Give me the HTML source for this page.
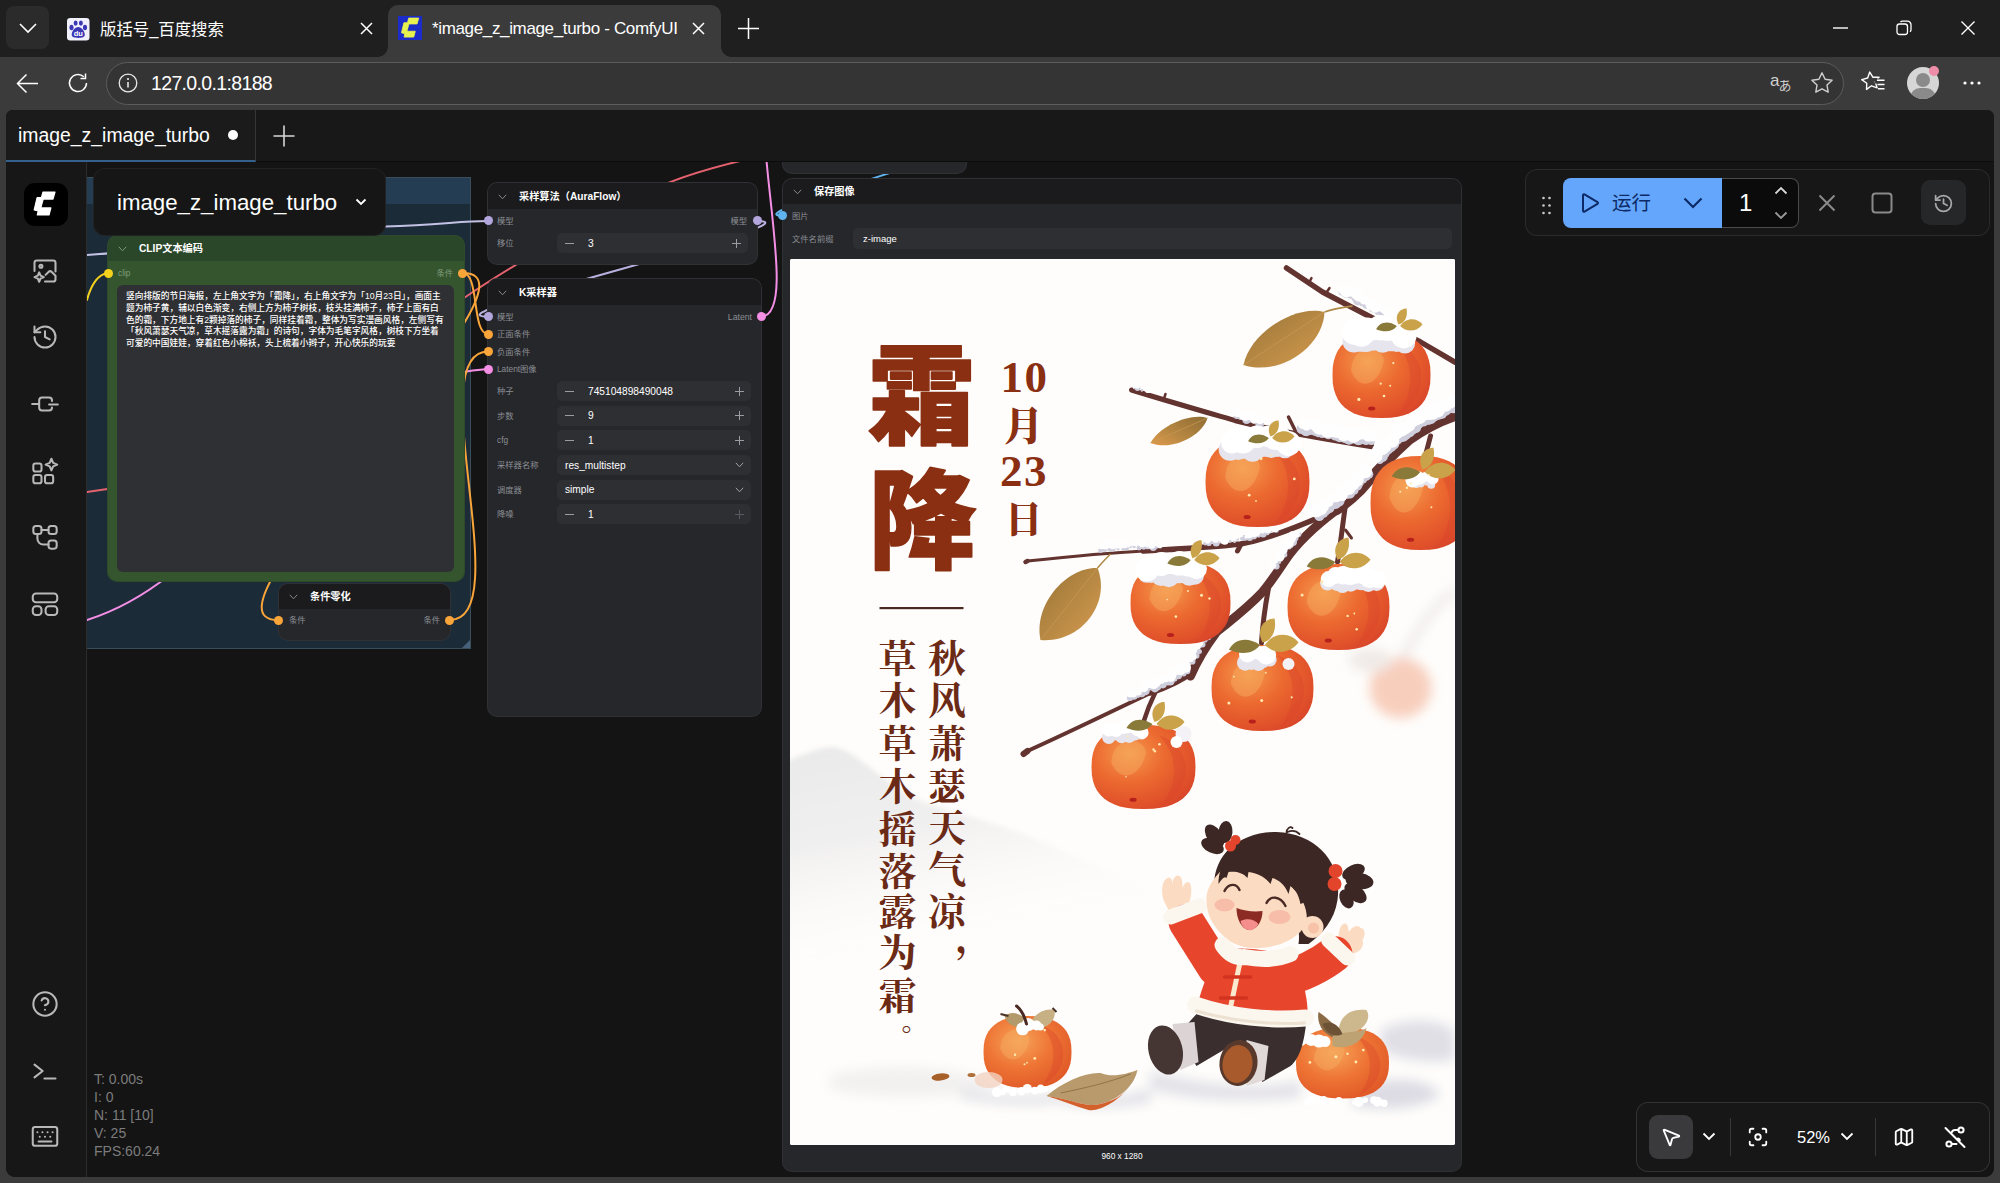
<!DOCTYPE html>
<html lang="zh">
<head>
<meta charset="utf-8">
<title>*image_z_image_turbo - ComfyUI</title>
<style>
*{box-sizing:border-box;margin:0;padding:0}
html,body{width:2000px;height:1183px;overflow:hidden}
body{background:#3b3b3b;font-family:"Liberation Sans","Noto Sans CJK SC",sans-serif;color:#fff;position:relative}
.abs{position:absolute}
svg{display:block;overflow:visible}
/* ---------- browser chrome ---------- */
#titlebar{position:absolute;left:0;top:0;width:2000px;height:57px;background:#1f1f1f}
#tabdrop{position:absolute;left:6px;top:6px;width:43px;height:43px;border-radius:8px;background:#2b2b2b}
.btab{position:absolute;top:5px;height:52px;font-size:17px;color:#fff;white-space:nowrap}
#tab2{left:388px;width:333px;background:#3b3b3b;border-radius:10px 10px 0 0}
#tab2:before,#tab2:after{content:"";position:absolute;bottom:0;width:10px;height:10px;background:radial-gradient(circle at 0 0,rgba(0,0,0,0) 9.5px,#3b3b3b 10px)}
#tab2:before{left:-10px}
#tab2:after{right:-10px;background:radial-gradient(circle at 100% 0,rgba(0,0,0,0) 9.5px,#3b3b3b 10px)}
#toolbar{position:absolute;left:0;top:57px;width:2000px;height:53px;background:#3b3b3b}
#urlbar{position:absolute;left:106px;top:62px;width:1738px;height:43px;border-radius:22px;background:#343434;border:1.5px solid #5c5c5c}
#url{position:absolute;left:151px;top:70px;font-size:19.5px;line-height:26px;color:#fff;letter-spacing:-0.65px}
/* ---------- page ---------- */
#page{position:absolute;left:6px;top:110px;width:1988px;height:1067px;background:#141414;border-radius:7px 7px 9px 9px;overflow:hidden}
#wtabs{position:absolute;left:0;top:0;width:1988px;height:53px;background:#181818;border-bottom:2px solid #0b0b0b}
#wtab{position:absolute;left:0;top:0;width:250px;height:52px;background:#1b1b1b;border-bottom:2px solid #33608c;border-right:1px solid #363636}
#wtab span{position:absolute;left:12px;top:12px;font-size:19.4px;line-height:26px;color:#fff;white-space:nowrap}
#side{position:absolute;left:0;top:52px;width:81px;height:1015px;background:#171718;border-right:1px solid #2c2c2c}
.sico{position:absolute;left:27px;width:24px;height:24px;color:#b8b8b8}
.sico svg{width:28px;height:28px;margin:-2px;fill:none;stroke:currentColor;stroke-width:1.750;stroke-linecap:round;stroke-linejoin:round}
#canvas{position:absolute;left:81px;top:52px;width:1907px;height:1015px;overflow:hidden;background:#141414}

/* ---------- canvas content (screen coords via #cv offset) ---------- */
#cv{position:absolute;left:-87px;top:-162px;width:2000px;height:1183px}
.node{position:absolute;background:#26272a;border-radius:9px;box-shadow:0 0 0 1px #303135}
.node .hd{position:absolute;left:0;top:0;right:0;background:#1b1b1d;border-radius:9px 9px 0 0}
.node .tt{position:absolute;left:31px;font-size:10.2px;font-weight:bold;color:#fff;white-space:nowrap;line-height:14px}
.chev{position:absolute;left:10px;width:9px;height:6px}
.lb{position:absolute;font-size:8.3px;line-height:12px;color:#8b8e95;white-space:nowrap}
.dot{position:absolute;width:9px;height:9px;border-radius:5px}
.wg{position:absolute;height:20px;background:#2e2f33;border-radius:5px}
.wg .v{position:absolute;top:3.800px;font-size:10.2px;line-height:14px;color:#fff;white-space:nowrap}
.wg .mi{position:absolute;left:8px;top:9.5px;width:9px;height:1px;background:#9a9ca2}
.wg .pl{position:absolute;right:7px;top:5.5px;width:9px;height:9px}
.wg .pl:before{content:"";position:absolute;left:0;top:4px;width:9px;height:1px;background:#9a9ca2}
.wg .pl:after{content:"";position:absolute;left:4px;top:0;width:1px;height:9px;background:#9a9ca2}
.wg .dd{position:absolute;right:7px;top:7px;width:9px;height:6px}
</style>
</head>
<body>
<!-- ================= BROWSER CHROME ================= -->
<div id="titlebar">
  <div id="tabdrop"><svg class="abs" style="left:12px;top:16px" width="20" height="12" viewBox="0 0 20 12"><path d="M2 2l8 8 8-8" fill="none" stroke="#fff" stroke-width="1.6"/></svg></div>
  <!-- tab 1 -->
  <div class="btab" id="tab1" style="left:56px;width:330px">
    <svg class="abs" style="left:10.500px;top:12.500px" width="22.500" height="22.500" viewBox="0 0 24 24"><rect x="0" y="0" width="24" height="24" rx="3.500" fill="#f1f1fd"/><g fill="#3b38b4"><ellipse cx="4.800" cy="10.200" rx="2.200" ry="2.900"/><ellipse cx="9.200" cy="5.400" rx="2.100" ry="2.800"/><ellipse cx="14.800" cy="5.400" rx="2.100" ry="2.800"/><ellipse cx="19.200" cy="10.200" rx="2.200" ry="2.900"/><path d="M12 9.500c3.400 0 7 4.600 7 8.200 0 3-2.800 3.500-7 3.500s-7-.5-7-3.500c0-3.600 3.600-8.200 7-8.200z"/></g><text x="12" y="19.600" font-size="8" font-weight="bold" text-anchor="middle" fill="#fff" font-family="Liberation Sans,sans-serif">du</text></svg>
    <span class="abs" style="left:44px;top:11px;line-height:26px;font-size:16.4px">版括号_百度搜索</span>
    <svg class="abs" style="left:304px;top:17px" width="13" height="13" viewBox="0 0 13 13"><path d="M1 1l11 11M12 1L1 12" stroke="#fff" stroke-width="1.5"/></svg>
  </div>
  <!-- tab 2 active -->
  <div class="btab" id="tab2">
    <svg class="abs" style="left:10px;top:11px" width="24" height="24" viewBox="2 3.500 29 29"><rect x="2" y="3.500" width="29" height="29" fill="#1c2cc8"/><path d="M15 6h12l-2 7.100H15.200l-2.400 8.800h10.100L21 29H9.300l.9-4.100-4-1.100 2.900-12.100h4.300z" fill="#e8f24e" stroke="#e8f24e" stroke-width="1" stroke-linejoin="round"/></svg>
    <span class="abs" style="left:44px;top:11px;line-height:26px;font-size:17px;letter-spacing:-0.35px">*image_z_image_turbo - ComfyUI</span>
    <svg class="abs" style="left:304px;top:17px" width="13" height="13" viewBox="0 0 13 13"><path d="M1 1l11 11M12 1L1 12" stroke="#fff" stroke-width="1.500"/></svg>
  </div>
  <svg class="abs" style="left:738px;top:18px" width="21" height="21" viewBox="0 0 21 21"><path d="M10.500 0v21M0 10.500h21" stroke="#fff" stroke-width="1.500"/></svg>
  <!-- window controls -->
  <svg class="abs" style="left:1833px;top:27px" width="15" height="2" viewBox="0 0 15 2"><path d="M0 1h15" stroke="#fff" stroke-width="1.400"/></svg>
  <svg class="abs" style="left:1896px;top:20px" width="16" height="16" viewBox="0 0 16 16"><rect x="1" y="4" width="10.500" height="10.500" rx="2.500" fill="none" stroke="#fff" stroke-width="1.300"/><path d="M4.500 2.200a2.500 2.500 0 0 1 2-1h5a3.500 3.500 0 0 1 3.500 3.500v5a2.500 2.500 0 0 1-1 2" fill="none" stroke="#fff" stroke-width="1.300"/></svg>
  <svg class="abs" style="left:1961px;top:21px" width="14" height="14" viewBox="0 0 14 14"><path d="M0.500 0.500l13 13M13.500 0.500l-13 13" stroke="#fff" stroke-width="1.400"/></svg>
</div>
<div id="toolbar"></div>
<!-- toolbar icons -->
<svg class="abs" style="left:16px;top:73px" width="23" height="21" viewBox="0 0 23 21"><path d="M22 10.500H2M10.500 1.500l-9 9 9 9" fill="none" stroke="#fff" stroke-width="1.500"/></svg>
<svg class="abs" style="left:67px;top:72px" width="22" height="22" viewBox="0 0 22 22"><path d="M19.500 11a8.500 8.500 0 1 1-2.700-6.200" fill="none" stroke="#fff" stroke-width="1.500"/><path d="M18.500 1.500v5h-5" fill="none" stroke="#fff" stroke-width="1.500"/></svg>
<div id="urlbar"></div>
<svg class="abs" style="left:118px;top:73px" width="20" height="20" viewBox="0 0 20 20"><circle cx="10" cy="10" r="8.800" fill="none" stroke="#e8e8e8" stroke-width="1.300"/><circle cx="10" cy="6" r="1.100" fill="#e8e8e8"/><path d="M10 9v5.500" stroke="#e8e8e8" stroke-width="1.600"/></svg>
<div id="url">127.0.0.1:8188</div>
<!-- right toolbar icons -->
<div class="abs" style="left:1770px;top:70px;font-size:17px;color:#cfcfcf;line-height:22px;font-family:'Liberation Sans','Noto Sans CJK JP',sans-serif">a<span style="font-size:13px;position:relative;top:4px;left:-1px">あ</span></div>
<svg class="abs" style="left:1810px;top:71px" width="24" height="23" viewBox="0 0 24 23"><path d="M12 1.800l3.100 6.400 7 1-5.100 4.900 1.200 7-6.200-3.300-6.200 3.300 1.200-7-5.100-4.900 7-1z" fill="none" stroke="#d0d0d0" stroke-width="1.400" stroke-linejoin="round"/></svg>
<svg class="abs" style="left:1860px;top:70px" width="26" height="24" viewBox="0 0 26 24"><path d="M11 2l2.500 5.600 6 .800-4.400 4.200 1 6.100-5.300-2.900-5.400 2.900 1.100-6.100L2 8.400l6.100-.800z" fill="none" stroke="#fff" stroke-width="1.400" stroke-linejoin="round" transform="rotate(-8 11 11)"/><rect x="15" y="8.500" width="10" height="5" fill="#3b3b3b"/><path d="M17 10.200h7.500M17.500 14.500h7M18 18.800h6.500" stroke="#fff" stroke-width="1.500"/></svg>
<div class="abs" style="left:1907px;top:67px;width:32px;height:32px;border-radius:16px;background:#d6d6d6;overflow:hidden"><div class="abs" style="left:9px;top:6px;width:14px;height:14px;border-radius:7px;background:#8a8a8a"></div><div class="abs" style="left:3px;top:21px;width:26px;height:20px;border-radius:12px;background:#8a8a8a"></div></div>
<div class="abs" style="left:1929px;top:66px;width:10px;height:10px;border-radius:5px;background:#ee8da8"></div>
<svg class="abs" style="left:1963px;top:81px" width="18" height="4" viewBox="0 0 18 4"><circle cx="2" cy="2" r="1.600" fill="#fff"/><circle cx="9" cy="2" r="1.600" fill="#fff"/><circle cx="16" cy="2" r="1.600" fill="#fff"/></svg>

<!-- ================= PAGE ================= -->
<div id="page">
  <div id="wtabs">
    <div id="wtab"><span>image_z_image_turbo</span><div class="abs" style="left:222px;top:20px;width:10px;height:10px;border-radius:5px;background:#fff"></div></div>
    <svg class="abs" style="left:267px;top:15px" width="22" height="22" viewBox="0 0 22 22"><path d="M11 0.500v21M0.500 11h21" stroke="#d8d8d8" stroke-width="1.600"/></svg>
  </div>
  <div id="canvas">

<div id="cv">
  <!-- group -->
  <div class="abs" style="left:60px;top:177px;width:411px;height:472px;background:#1b2b38;border:1px solid #3a4d5a"></div><svg class="abs" style="left:462px;top:640px" width="8" height="8" viewBox="0 0 8 8"><path d="M8 0v8H0z" fill="#46627a"/></svg>
  <div class="abs" style="left:61px;top:178px;width:409px;height:26px;background:#243d52"></div>
  <!-- upper partial node -->

  <svg class="abs" style="left:0;top:0" width="2000" height="1183" viewBox="0 0 2000 1183" fill="none" stroke-width="2" stroke-linecap="round">
    <path d="M87 300 C 91 285, 97 274.500, 108 273" stroke="#f5d31d"/>
    <path d="M87 255 C 200 248, 330 228, 385 226.500 S 460 221, 488 221" stroke="#c3c1e4"/>
    <path d="M87 492 C 250 472, 400 345, 464 298 C 520 260, 600 215, 668 183 C 700 170, 735 161, 790 150" stroke="#e4626e"/>
    <path d="M87 620 C 150 600, 190 560, 250 500 S 400 374, 488 369" stroke="#f58fe6"/>
    <path d="M463 273 C 479.500 273, 471.500 334, 488 334" stroke="#f9a53a"/>
    <path d="M463 273 C 561 273, 180 620, 278 620" stroke="#f9a53a"/>
    <path d="M450 620 C 518 620, 420 351.500, 488 351.500" stroke="#f9a53a"/>
    <path d="M757 221 C 828 221, 417 316.500, 488 316.500" stroke="#b9b1e0"/>
    <path d="M761 316.500 C 809 316.500, 726 57, 785.500 45.500" stroke="#f58fe6"/>
    <path d="M966 140 C 1020 140, 729 215.700, 783 215.700" stroke="#5fb3ee"/>
  </svg>

  <div class="abs" style="left:783px;top:150px;width:183px;height:23px;background:#26272a;border-radius:9px;box-shadow:0 0 0 1px #303135"></div>
  <!-- CLIP node -->
  <div class="node" style="left:108px;top:236px;width:356px;height:345px;background:#35552f;box-shadow:0 0 0 1px #2f4a2b">
    <div class="hd" style="height:25px;background:#2b472a"></div>
    <svg class="chev" style="top:10px" viewBox="0 0 9 6"><path d="M0.800 0.800l3.700 4 3.700-4" fill="none" stroke="#7d9a78" stroke-width="1"/></svg>
    <div class="tt" style="top:6px">CLIP文本编码</div>
    <div class="dot" style="left:-4px;top:32.500px;background:#f5d31d"></div>
    <div class="lb" style="left:10px;top:31px;color:#7f9c78">clip</div>
    <div class="lb" style="right:11px;top:31px;color:#7f9c78">条件</div>
    <div class="dot" style="right:-3px;top:32.500px;background:#f9a53a"></div>
    <div class="abs" id="clipta" style="left:9px;top:49px;width:337px;height:287px;background:#2f3033;border-radius:6px;padding:6.300px 9px 0 9px;font-size:8.700px;line-height:11.700px;color:#fff;font-weight:500;white-space:nowrap">竖向排版的节日海报，左上角文字为「霜降」，右上角文字为「10月23日」，画面主<br>题为柿子黄，辅以白色渐变，右侧上方为柿子树枝，枝头挂满柿子，柿子上面有白<br>色的霜，下方地上有2颗掉落的柿子，同样挂着霜，整体为写实漫画风格，左侧写有<br>「秋风萧瑟天气凉，草木摇落露为霜」的诗句，字体为毛笔字风格，树枝下方坐着<br>可爱的中国娃娃，穿着红色小棉袄，头上梳着小辫子，开心快乐的玩耍</div>
  </div>
  <!-- cond zero node -->
  <div class="node" style="left:279px;top:584px;width:171px;height:56px">
    <div class="hd" style="height:25px"></div>
    <svg class="chev" style="top:10px" viewBox="0 0 9 6"><path d="M0.800 0.800l3.700 4 3.700-4" fill="none" stroke="#85878d" stroke-width="1"/></svg>
    <div class="tt" style="top:6px">条件零化</div>
    <div class="dot" style="left:-5px;top:31.500px;background:#f9a53a"></div>
    <div class="lb" style="left:10px;top:30px">条件</div>
    <div class="lb" style="right:10px;top:30px">条件</div>
    <div class="dot" style="right:-4px;top:31.500px;background:#f9a53a"></div>
  </div>
  <!-- sampling node -->
  <div class="node" style="left:488px;top:183px;width:269px;height:81px">
    <div class="hd" style="height:26px"></div>
    <svg class="chev" style="top:11px" viewBox="0 0 9 6"><path d="M0.800 0.800l3.700 4 3.700-4" fill="none" stroke="#85878d" stroke-width="1"/></svg>
    <div class="tt" style="top:7px">采样算法（AuraFlow）</div>
    <div class="dot" style="left:-4.500px;top:33px;background:#b3a6dc"></div>
    <div class="lb" style="left:9px;top:31.500px">模型</div>
    <div class="lb" style="right:10px;top:31.500px">模型</div>
    <div class="dot" style="right:-4.500px;top:33px;background:#b3a6dc"></div>
    <div class="lb" style="left:9px;top:54px">移位</div>
    <div class="wg" style="left:69px;top:50px;width:191px"><div class="mi"></div><div class="v" style="left:31px">3</div><div class="pl"></div></div>
  </div>
  <!-- KSampler -->
  <div class="node" style="left:488px;top:279px;width:273px;height:437px">
    <div class="hd" style="height:26px"></div>
    <svg class="chev" style="top:11px" viewBox="0 0 9 6"><path d="M0.800 0.800l3.700 4 3.700-4" fill="none" stroke="#85878d" stroke-width="1"/></svg>
    <div class="tt" style="top:7px">K采样器</div>
    <div class="dot" style="left:-4.500px;top:33px;background:#b3a6dc"></div>
    <div class="lb" style="left:9px;top:31.500px">模型</div>
    <div class="lb" style="right:9px;top:31.500px;font-size:8.700px">Latent</div>
    <div class="dot" style="right:-4.500px;top:33px;background:#f58fe6"></div>
    <div class="dot" style="left:-4.500px;top:50.500px;background:#f9a53a"></div>
    <div class="lb" style="left:9px;top:49px">正面条件</div>
    <div class="dot" style="left:-4.500px;top:68px;background:#f9a53a"></div>
    <div class="lb" style="left:9px;top:66.500px">负面条件</div>
    <div class="dot" style="left:-4.500px;top:85.500px;background:#f58fe6"></div>
    <div class="lb" style="left:9px;top:84px">Latent图像</div>
    <div class="lb" style="left:9px;top:106px">种子</div>
    <div class="wg" style="left:69px;top:102px;width:194px"><div class="mi"></div><div class="v" style="left:31px">745104898490048</div><div class="pl"></div></div>
    <div class="lb" style="left:9px;top:130.500px">步数</div>
    <div class="wg" style="left:69px;top:126.500px;width:194px"><div class="mi"></div><div class="v" style="left:31px">9</div><div class="pl"></div></div>
    <div class="lb" style="left:9px;top:155px">cfg</div>
    <div class="wg" style="left:69px;top:151px;width:194px"><div class="mi"></div><div class="v" style="left:31px">1</div><div class="pl"></div></div>
    <div class="lb" style="left:9px;top:180px">采样器名称</div>
    <div class="wg" style="left:69px;top:176px;width:194px"><div class="v" style="left:8px">res_multistep</div><svg class="dd" viewBox="0 0 9 6"><path d="M0.800 0.800l3.700 4 3.700-4" fill="none" stroke="#a0a2a8" stroke-width="1"/></svg></div>
    <div class="lb" style="left:9px;top:204.500px">调度器</div>
    <div class="wg" style="left:69px;top:200.500px;width:194px"><div class="v" style="left:8px">simple</div><svg class="dd" viewBox="0 0 9 6"><path d="M0.800 0.800l3.700 4 3.700-4" fill="none" stroke="#a0a2a8" stroke-width="1"/></svg></div>
    <div class="lb" style="left:9px;top:229px">降噪</div>
    <div class="wg" style="left:69px;top:225px;width:194px"><div class="mi"></div><div class="v" style="left:31px">1</div><div class="pl" style="opacity:.4"></div></div>
  </div>
  <!-- Save image node -->
  <div class="node" style="left:783px;top:179px;width:678px;height:992px">
    <div class="hd" style="height:25px"></div>
    <svg class="chev" style="top:10px" viewBox="0 0 9 6"><path d="M0.800 0.800l3.700 4 3.700-4" fill="none" stroke="#85878d" stroke-width="1"/></svg>
    <div class="tt" style="top:6px">保存图像</div>
    <div class="dot" style="left:-5px;top:32px;background:#5fb3ee"></div>
    <div class="lb" style="left:9px;top:30.500px">图片</div>
    <div class="lb" style="left:9px;top:54px">文件名前缀</div>
    <div class="wg" style="left:70px;top:49px;width:599px;height:21px"><div class="v" style="left:10px;font-size:9.500px;top:3.500px">z-image</div></div>
    <div class="abs" style="left:0;top:971px;width:678px;text-align:center;font-size:8.300px;line-height:12px;color:#fff">960 x 1280</div>
    <div class="abs" id="poster" style="left:6.500px;top:80px;width:665px;height:886px;background:#fefdfb;border-radius:2px;overflow:hidden">
<!--POSTER-->
<svg class="abs" style="left:0;top:0" width="665" height="886" viewBox="789.5 259 665 886">
<defs>
<radialGradient id="pg" cx="0.36" cy="0.34" r="0.75"><stop offset="0" stop-color="#f59a4e"/><stop offset="0.45" stop-color="#ec6a30"/><stop offset="0.85" stop-color="#e0502a"/><stop offset="1" stop-color="#d8452a"/></radialGradient>
<radialGradient id="pg2" cx="0.4" cy="0.35" r="0.75"><stop offset="0" stop-color="#f6a45a"/><stop offset="0.5" stop-color="#ee7434"/><stop offset="1" stop-color="#de5526"/></radialGradient>
<linearGradient id="lf" x1="0" y1="0" x2="1" y2="1"><stop offset="0" stop-color="#9a7438"/><stop offset="0.55" stop-color="#b98a44"/><stop offset="1" stop-color="#d89a50"/></linearGradient>
<linearGradient id="lf2" x1="1" y1="0" x2="0" y2="1"><stop offset="0" stop-color="#8f6c34"/><stop offset="0.6" stop-color="#b88842"/><stop offset="1" stop-color="#e09a4c"/></linearGradient>
<linearGradient id="hillg" x1="0" y1="0" x2="0.35" y2="1"><stop offset="0" stop-color="#e9e9ea"/><stop offset="0.45" stop-color="#f1f0f0"/><stop offset="1" stop-color="#fefdfb" stop-opacity="0"/></linearGradient>
<filter id="b6" x="-20%" y="-20%" width="140%" height="140%"><feGaussianBlur stdDeviation="6"/></filter>
<filter id="b12" x="-20%" y="-30%" width="140%" height="160%"><feGaussianBlur stdDeviation="12"/></filter>
<filter id="b3" x="-20%" y="-20%" width="140%" height="140%"><feGaussianBlur stdDeviation="2.5"/></filter>
<filter id="b1" x="-20%" y="-20%" width="140%" height="140%"><feGaussianBlur stdDeviation="0.8"/></filter>
</defs>
<rect x="789.5" y="259" width="665" height="886" fill="#fefdfb"/>
<path d="M780 764 C 800 756, 815 748, 832 747 C 850 748, 870 770, 907 795 C 935 808, 960 814, 988 822 C 1020 832, 1045 842, 1069 854 C 1095 866, 1115 874, 1150 888 L 1150 960 L 780 960 Z" fill="url(#hillg)" filter="url(#b3)"/>
<g filter="url(#b6)" opacity=".55"><path d="M1454 590 C 1430 610, 1410 640, 1402 660" stroke="#d8cfd0" stroke-width="6" fill="none"/><ellipse cx="1400" cy="688" rx="31" ry="30" fill="#f3a98a"/><ellipse cx="1370" cy="660" rx="22" ry="12" fill="#e4dcd8"/></g>
<g filter="url(#b6)">
<path d="M830 1075 C 900 1060, 960 1068, 1000 1085 C 960 1100, 880 1100, 830 1090Z" fill="#efeeee" opacity=".8"/>
<path d="M1380 1030 C 1410 1015, 1440 1020, 1454 1030 L1454 1060 C 1430 1065, 1400 1060, 1380 1050Z" fill="#e0dfe6"/>
<path d="M1150 1070 C 1200 1085, 1260 1090, 1300 1080 L 1300 1098 C 1240 1104, 1190 1100, 1150 1090Z" fill="#e3e2e8"/>
<path d="M1360 1085 C 1400 1075, 1430 1080, 1440 1095 C 1420 1110, 1380 1112, 1350 1105Z" fill="#dddce4"/>
<path d="M1050 1092 C 1090 1100, 1130 1098, 1150 1088 L 1150 1102 C 1110 1110, 1070 1108, 1050 1100Z" fill="#e0dfe6"/>
<path d="M960 1090 C 1000 1096, 1040 1098, 1060 1092 L 1050 1104 C 1010 1106, 980 1102, 960 1098Z" fill="#e2e1e6"/>
</g>
<path d="M1286 268 L1322 292 L1372 318 L1420 342 L1454 362" stroke="#63332f" stroke-width="5.5" fill="none" stroke-linecap="round" stroke-linejoin="round"/>
<path d="M1308 284 l3 -6 M1325 294 l4 -6" stroke="#63332f" stroke-width="2.5" fill="none" stroke-linecap="round" stroke-linejoin="round"/>
<path d="M1131 390 C 1170 402, 1205 412, 1236 421 C 1270 430, 1330 440, 1373 447" stroke="#63332f" stroke-width="5" fill="none" stroke-linecap="round" stroke-linejoin="round"/>
<path d="M1295 431 l-7 -14" stroke="#63332f" stroke-width="3.5" fill="none" stroke-linecap="round" stroke-linejoin="round"/>
<path d="M1163 400 l2 -6" stroke="#63332f" stroke-width="2.5" fill="none" stroke-linecap="round" stroke-linejoin="round"/>
<path d="M1460 414 C 1440 420, 1425 428, 1408 440 C 1390 456, 1372 476, 1360 490 C 1350 500, 1345 504, 1336 510" stroke="#63332f" stroke-width="10.5" fill="none" stroke-linecap="round" stroke-linejoin="round"/>
<path d="M1336 510 C 1320 522, 1300 538, 1285 560 C 1275 575, 1268 585, 1262 592 C 1245 610, 1228 622, 1216 632 C 1204 648, 1196 662, 1190 676" stroke="#63332f" stroke-width="9" fill="none" stroke-linecap="round" stroke-linejoin="round"/>
<path d="M1192 672 C 1180 682, 1165 688, 1150 693" stroke="#63332f" stroke-width="5.5" fill="none" stroke-linecap="round" stroke-linejoin="round"/>
<path d="M1150 693 C 1110 712, 1065 734, 1027 751" stroke="#63332f" stroke-width="4" fill="none" stroke-linecap="round" stroke-linejoin="round"/>
<path d="M1027 751 l-4 3" stroke="#63332f" stroke-width="6" fill="none" stroke-linecap="round" stroke-linejoin="round"/>
<path d="M1027 561 C 1065 557, 1105 553, 1143 551" stroke="#63332f" stroke-width="3.2" fill="none" stroke-linecap="round" stroke-linejoin="round"/>
<path d="M1143 551 C 1180 549, 1215 547, 1240 544 C 1265 540, 1300 526, 1338 509" stroke="#63332f" stroke-width="5.5" fill="none" stroke-linecap="round" stroke-linejoin="round"/>
<path d="M1240 545 l-3 6" stroke="#63332f" stroke-width="5" fill="none" stroke-linecap="round" stroke-linejoin="round"/>
<path d="M1027 561 l-2 1" stroke="#63332f" stroke-width="4.5" fill="none" stroke-linecap="round" stroke-linejoin="round"/>
<path d="M1430 436 C 1427 448, 1424 458, 1422 468" stroke="#63332f" stroke-width="5" fill="none" stroke-linecap="round" stroke-linejoin="round"/>
<path d="M1345 505 C 1342 525, 1340 545, 1337 562" stroke="#63332f" stroke-width="5" fill="none" stroke-linecap="round" stroke-linejoin="round"/>
<path d="M1345 530 l6 8" stroke="#63332f" stroke-width="3" fill="none" stroke-linecap="round" stroke-linejoin="round"/>
<path d="M1268 588 C 1264 610, 1262 625, 1261 643" stroke="#63332f" stroke-width="5" fill="none" stroke-linecap="round" stroke-linejoin="round"/>
<path d="M1155 692 C 1150 702, 1146 712, 1143 722" stroke="#63332f" stroke-width="4.5" fill="none" stroke-linecap="round" stroke-linejoin="round"/>
<path d="M1205 546 C 1240 548, 1270 540, 1300 528" stroke="#63332f" stroke-width="0.1" fill="none" stroke-linecap="round" stroke-linejoin="round"/>
<g><circle cx="1341.3" cy="292.3" r="3.2" fill="#cfcedd"/><circle cx="1345.5" cy="293.7" r="4" fill="#cfcedd"/><circle cx="1349.9" cy="296.1" r="2.6" fill="#cfcedd"/><circle cx="1354.2" cy="298.5" r="3.1" fill="#cfcedd"/><circle cx="1357.2" cy="300.8" r="4.6" fill="#cfcedd"/><circle cx="1361.5" cy="303.3" r="2.9" fill="#cfcedd"/><circle cx="1365.7" cy="304.9" r="3.8" fill="#cfcedd"/><circle cx="1369.7" cy="306.7" r="2.7" fill="#cfcedd"/><circle cx="1372.3" cy="309.3" r="3.3" fill="#cfcedd"/><circle cx="1377.3" cy="311.1" r="3.7" fill="#cfcedd"/><circle cx="1381.3" cy="312" r="4.3" fill="#cfcedd"/><circle cx="1384" cy="314.9" r="4.5" fill="#cfcedd"/><circle cx="1387" cy="315.1" r="4.7" fill="#cfcedd"/><circle cx="1392.3" cy="317.5" r="3.1" fill="#cfcedd"/><circle cx="1394.7" cy="319.5" r="4.1" fill="#cfcedd"/><circle cx="1398.4" cy="321.4" r="3.5" fill="#cfcedd"/><circle cx="1403.1" cy="323.4" r="4" fill="#cfcedd"/><circle cx="1406.7" cy="325.9" r="4.8" fill="#cfcedd"/><circle cx="1408.9" cy="327.4" r="4.2" fill="#cfcedd"/><circle cx="1343.8" cy="289.6" r="5.9" fill="#fefefe"/><circle cx="1345.7" cy="292.4" r="5.1" fill="#fefefe"/><circle cx="1349.9" cy="292" r="4.7" fill="#fefefe"/><circle cx="1356" cy="294.1" r="5.6" fill="#fefefe"/><circle cx="1358.3" cy="296.3" r="5.4" fill="#fefefe"/><circle cx="1363.4" cy="300.5" r="3.9" fill="#fefefe"/><circle cx="1366.9" cy="300" r="3.1" fill="#fefefe"/><circle cx="1370.1" cy="304.5" r="5.2" fill="#fefefe"/><circle cx="1374.6" cy="306.9" r="5.9" fill="#fefefe"/><circle cx="1376.9" cy="307.5" r="3.9" fill="#fefefe"/><circle cx="1380.9" cy="308.7" r="3.1" fill="#fefefe"/><circle cx="1384.4" cy="309.4" r="4.8" fill="#fefefe"/><circle cx="1388.6" cy="314" r="5.6" fill="#fefefe"/><circle cx="1392.4" cy="314.3" r="5.7" fill="#fefefe"/><circle cx="1396.8" cy="316.6" r="4.6" fill="#fefefe"/><circle cx="1400.4" cy="319.4" r="4.7" fill="#fefefe"/><circle cx="1403.5" cy="320.6" r="4.5" fill="#fefefe"/><circle cx="1406.7" cy="323.2" r="3.7" fill="#fefefe"/><circle cx="1411.1" cy="322.1" r="4.6" fill="#fefefe"/></g>
<g><circle cx="1236" cy="416.2" r="2.7" fill="#cfcedd"/><circle cx="1240.3" cy="417.5" r="2.5" fill="#cfcedd"/><circle cx="1246.1" cy="419.6" r="4.4" fill="#cfcedd"/><circle cx="1249.9" cy="419.9" r="2.7" fill="#cfcedd"/><circle cx="1253.4" cy="421.1" r="2.6" fill="#cfcedd"/><circle cx="1259.1" cy="423.7" r="4.4" fill="#cfcedd"/><circle cx="1236.8" cy="412.4" r="4.9" fill="#fefefe"/><circle cx="1242.7" cy="415.4" r="4.4" fill="#fefefe"/><circle cx="1245.1" cy="416" r="5.1" fill="#fefefe"/><circle cx="1250.7" cy="416" r="4.5" fill="#fefefe"/><circle cx="1253.8" cy="419.6" r="3.9" fill="#fefefe"/><circle cx="1259.5" cy="419.1" r="5.1" fill="#fefefe"/></g>
<g><circle cx="1301.3" cy="428.8" r="5.3" fill="#cfcedd"/><circle cx="1305.7" cy="430.1" r="6.1" fill="#cfcedd"/><circle cx="1309.5" cy="431.1" r="3.9" fill="#cfcedd"/><circle cx="1314.8" cy="430.5" r="5.4" fill="#cfcedd"/><circle cx="1317.9" cy="432.3" r="5" fill="#cfcedd"/><circle cx="1321.8" cy="432.7" r="5.2" fill="#cfcedd"/><circle cx="1327.9" cy="434.8" r="4.5" fill="#cfcedd"/><circle cx="1332.1" cy="434.5" r="4.2" fill="#cfcedd"/><circle cx="1334.8" cy="435.2" r="5.3" fill="#cfcedd"/><circle cx="1339.3" cy="436.3" r="5.9" fill="#cfcedd"/><circle cx="1345" cy="437.1" r="6.2" fill="#cfcedd"/><circle cx="1348.7" cy="438.6" r="6.1" fill="#cfcedd"/><circle cx="1353.8" cy="439.2" r="4.3" fill="#cfcedd"/><circle cx="1358" cy="439.1" r="6.2" fill="#cfcedd"/><circle cx="1360.9" cy="439.5" r="4.7" fill="#cfcedd"/><circle cx="1365.5" cy="441.1" r="4" fill="#cfcedd"/><circle cx="1370.6" cy="441.2" r="3.8" fill="#cfcedd"/><circle cx="1302.7" cy="423.6" r="5.4" fill="#fefefe"/><circle cx="1306.1" cy="425.3" r="5.4" fill="#fefefe"/><circle cx="1312" cy="424.2" r="4.7" fill="#fefefe"/><circle cx="1316" cy="425.2" r="6.7" fill="#fefefe"/><circle cx="1318.9" cy="427.9" r="6.9" fill="#fefefe"/><circle cx="1322.3" cy="427.7" r="4.5" fill="#fefefe"/><circle cx="1327.1" cy="430.4" r="7.4" fill="#fefefe"/><circle cx="1333.7" cy="430.2" r="7.3" fill="#fefefe"/><circle cx="1336.3" cy="432.4" r="5.6" fill="#fefefe"/><circle cx="1341.3" cy="433.1" r="4.8" fill="#fefefe"/><circle cx="1343.5" cy="434.2" r="7.1" fill="#fefefe"/><circle cx="1348.7" cy="433.9" r="4.8" fill="#fefefe"/><circle cx="1353.1" cy="435.5" r="7.3" fill="#fefefe"/><circle cx="1357.3" cy="434.3" r="6.1" fill="#fefefe"/><circle cx="1361" cy="434.5" r="5" fill="#fefefe"/><circle cx="1368" cy="435.2" r="6.6" fill="#fefefe"/><circle cx="1372.4" cy="437" r="4.6" fill="#fefefe"/></g>
<g><circle cx="1452.7" cy="407" r="6.2" fill="#cfcedd"/><circle cx="1447.5" cy="409.1" r="4.9" fill="#cfcedd"/><circle cx="1445.4" cy="410.3" r="5.4" fill="#cfcedd"/><circle cx="1440.8" cy="412.9" r="6.1" fill="#cfcedd"/><circle cx="1437.4" cy="414.1" r="6" fill="#cfcedd"/><circle cx="1433.3" cy="415.9" r="5.9" fill="#cfcedd"/><circle cx="1429.9" cy="418.1" r="6.2" fill="#cfcedd"/><circle cx="1427.4" cy="419" r="5.9" fill="#cfcedd"/><circle cx="1423" cy="422" r="4.5" fill="#cfcedd"/><circle cx="1418" cy="423.4" r="5.3" fill="#cfcedd"/><circle cx="1414.9" cy="427.5" r="5.8" fill="#cfcedd"/><circle cx="1411.1" cy="429.5" r="5.7" fill="#cfcedd"/><circle cx="1409" cy="432.5" r="5.1" fill="#cfcedd"/><circle cx="1404.9" cy="434.7" r="5.5" fill="#cfcedd"/><circle cx="1402" cy="435.9" r="6.2" fill="#cfcedd"/><circle cx="1396.9" cy="439.6" r="5.1" fill="#cfcedd"/><circle cx="1393.1" cy="443.9" r="5.7" fill="#cfcedd"/><circle cx="1390.3" cy="446.7" r="5.5" fill="#cfcedd"/><circle cx="1387.6" cy="449.4" r="5" fill="#cfcedd"/><circle cx="1384.7" cy="453.3" r="4.6" fill="#cfcedd"/><circle cx="1381.5" cy="456.3" r="5.9" fill="#cfcedd"/><circle cx="1379.3" cy="459.7" r="4.3" fill="#cfcedd"/><circle cx="1449.4" cy="401.8" r="6.9" fill="#fefefe"/><circle cx="1445.3" cy="405.5" r="6.2" fill="#fefefe"/><circle cx="1442.5" cy="406.5" r="5.2" fill="#fefefe"/><circle cx="1440.6" cy="406.7" r="6.2" fill="#fefefe"/><circle cx="1436.7" cy="409.7" r="7.9" fill="#fefefe"/><circle cx="1431.7" cy="412" r="7.7" fill="#fefefe"/><circle cx="1428.3" cy="412.6" r="7.4" fill="#fefefe"/><circle cx="1424.4" cy="413.2" r="7.1" fill="#fefefe"/><circle cx="1418.9" cy="417" r="7.2" fill="#fefefe"/><circle cx="1415.1" cy="418.2" r="7.4" fill="#fefefe"/><circle cx="1412.7" cy="421.8" r="5.4" fill="#fefefe"/><circle cx="1408.8" cy="426" r="5.8" fill="#fefefe"/><circle cx="1405.1" cy="428.5" r="5.8" fill="#fefefe"/><circle cx="1401.1" cy="429.8" r="6.8" fill="#fefefe"/><circle cx="1397.1" cy="432.1" r="6.4" fill="#fefefe"/><circle cx="1394.1" cy="435.8" r="5.9" fill="#fefefe"/><circle cx="1391.7" cy="440.7" r="7" fill="#fefefe"/><circle cx="1387.8" cy="442.1" r="6.1" fill="#fefefe"/><circle cx="1384.6" cy="446.6" r="6.2" fill="#fefefe"/><circle cx="1381.1" cy="447.4" r="7.8" fill="#fefefe"/><circle cx="1377.6" cy="450.6" r="6.3" fill="#fefefe"/><circle cx="1374.9" cy="455.8" r="7.3" fill="#fefefe"/></g>
<g><circle cx="1368.2" cy="474.2" r="4.6" fill="#cfcedd"/><circle cx="1365.8" cy="476.8" r="4" fill="#cfcedd"/><circle cx="1362.5" cy="479.4" r="4" fill="#cfcedd"/><circle cx="1358.4" cy="482.7" r="4.9" fill="#cfcedd"/><circle cx="1356.7" cy="485.9" r="4.9" fill="#cfcedd"/><circle cx="1353.6" cy="490.4" r="4.4" fill="#cfcedd"/><circle cx="1349.5" cy="493.3" r="5.2" fill="#cfcedd"/><circle cx="1346.8" cy="494.7" r="4" fill="#cfcedd"/><circle cx="1341.7" cy="497.5" r="4.2" fill="#cfcedd"/><circle cx="1338.3" cy="500.9" r="5.8" fill="#cfcedd"/><circle cx="1335.2" cy="503.5" r="5.4" fill="#cfcedd"/><circle cx="1331.3" cy="505.1" r="4" fill="#cfcedd"/><circle cx="1328.7" cy="507.7" r="5.5" fill="#cfcedd"/><circle cx="1325.4" cy="510" r="5.2" fill="#cfcedd"/><circle cx="1322.5" cy="512.2" r="5.7" fill="#cfcedd"/><circle cx="1318.9" cy="515.8" r="5.2" fill="#cfcedd"/><circle cx="1364.9" cy="471.4" r="6.7" fill="#fefefe"/><circle cx="1362" cy="474" r="4.9" fill="#fefefe"/><circle cx="1359.1" cy="475" r="5" fill="#fefefe"/><circle cx="1356.7" cy="479.8" r="6.5" fill="#fefefe"/><circle cx="1352.1" cy="483.4" r="7.1" fill="#fefefe"/><circle cx="1350.6" cy="485.1" r="6.3" fill="#fefefe"/><circle cx="1348.1" cy="488" r="7" fill="#fefefe"/><circle cx="1341.8" cy="491.4" r="6.5" fill="#fefefe"/><circle cx="1341" cy="494.6" r="6.4" fill="#fefefe"/><circle cx="1335.6" cy="496.9" r="5.4" fill="#fefefe"/><circle cx="1332.6" cy="498" r="4.6" fill="#fefefe"/><circle cx="1328.1" cy="502.1" r="4.9" fill="#fefefe"/><circle cx="1325.3" cy="503.3" r="4.9" fill="#fefefe"/><circle cx="1321.5" cy="505.8" r="7.1" fill="#fefefe"/><circle cx="1320.5" cy="509.3" r="6.1" fill="#fefefe"/><circle cx="1315.4" cy="510.4" r="7.1" fill="#fefefe"/></g>
<g><circle cx="1298.7" cy="534.6" r="2.3" fill="#cfcedd"/><circle cx="1294.6" cy="538" r="3.4" fill="#cfcedd"/><circle cx="1292.4" cy="542" r="4.1" fill="#cfcedd"/><circle cx="1290.5" cy="544.9" r="2.8" fill="#cfcedd"/><circle cx="1288.9" cy="547.3" r="2.2" fill="#cfcedd"/><circle cx="1284.8" cy="551" r="2.3" fill="#cfcedd"/><circle cx="1284.1" cy="554.8" r="2.7" fill="#cfcedd"/><circle cx="1280.4" cy="559.7" r="2" fill="#cfcedd"/><circle cx="1278.8" cy="562" r="1.9" fill="#cfcedd"/><circle cx="1275.8" cy="566.3" r="3.3" fill="#cfcedd"/><circle cx="1295.8" cy="534.3" r="3.5" fill="#fefefe"/><circle cx="1291.9" cy="534.9" r="3.7" fill="#fefefe"/><circle cx="1290.6" cy="538.5" r="4.8" fill="#fefefe"/><circle cx="1288.4" cy="543.3" r="4.8" fill="#fefefe"/><circle cx="1285.2" cy="545.4" r="4.6" fill="#fefefe"/><circle cx="1282.1" cy="550.1" r="4.6" fill="#fefefe"/><circle cx="1281.4" cy="553.5" r="2.3" fill="#fefefe"/><circle cx="1279.4" cy="556.5" r="4.8" fill="#fefefe"/><circle cx="1275" cy="560.2" r="2.6" fill="#fefefe"/><circle cx="1272.3" cy="564.9" r="3.5" fill="#fefefe"/></g>
<g><circle cx="1214.1" cy="628.8" r="2.4" fill="#cfcedd"/><circle cx="1210.3" cy="633.1" r="3.4" fill="#cfcedd"/><circle cx="1207.5" cy="636.7" r="3.5" fill="#cfcedd"/><circle cx="1204.4" cy="639.8" r="2.8" fill="#cfcedd"/><circle cx="1202" cy="644.4" r="3" fill="#cfcedd"/><circle cx="1199.5" cy="646.8" r="1.7" fill="#cfcedd"/><circle cx="1198.9" cy="651.5" r="2.5" fill="#cfcedd"/><circle cx="1195.8" cy="655.4" r="3.2" fill="#cfcedd"/><circle cx="1193.7" cy="659" r="1.6" fill="#cfcedd"/><circle cx="1191.9" cy="661.5" r="3.1" fill="#cfcedd"/><circle cx="1211.6" cy="626.8" r="2.3" fill="#fefefe"/><circle cx="1208.6" cy="632.2" r="3.9" fill="#fefefe"/><circle cx="1205.2" cy="634.1" r="4.1" fill="#fefefe"/><circle cx="1202.1" cy="637.8" r="3" fill="#fefefe"/><circle cx="1198.8" cy="642.6" r="4.2" fill="#fefefe"/><circle cx="1198.2" cy="647.1" r="1.9" fill="#fefefe"/><circle cx="1194.5" cy="648.4" r="2.1" fill="#fefefe"/><circle cx="1192.5" cy="652.1" r="3.1" fill="#fefefe"/><circle cx="1193.2" cy="656.7" r="3" fill="#fefefe"/><circle cx="1190.4" cy="659.4" r="2.7" fill="#fefefe"/></g>
<g><circle cx="1186.4" cy="670.8" r="3.5" fill="#cfcedd"/><circle cx="1183.2" cy="673.7" r="2.7" fill="#cfcedd"/><circle cx="1177.9" cy="675.5" r="3.7" fill="#cfcedd"/><circle cx="1174.1" cy="678.7" r="2.9" fill="#cfcedd"/><circle cx="1169.7" cy="681" r="4.6" fill="#cfcedd"/><circle cx="1166.8" cy="682" r="3.6" fill="#cfcedd"/><circle cx="1162.4" cy="684.6" r="3.8" fill="#cfcedd"/><circle cx="1157.3" cy="686.5" r="3.7" fill="#cfcedd"/><circle cx="1154.4" cy="687.9" r="4.5" fill="#cfcedd"/><circle cx="1147.9" cy="688.8" r="2.3" fill="#cfcedd"/><circle cx="1144.8" cy="690.9" r="4.4" fill="#cfcedd"/><circle cx="1141.2" cy="692.9" r="4.3" fill="#cfcedd"/><circle cx="1137" cy="694.7" r="3.2" fill="#cfcedd"/><circle cx="1133.5" cy="695.6" r="4.2" fill="#cfcedd"/><circle cx="1129.6" cy="697.8" r="3.2" fill="#cfcedd"/><circle cx="1185.5" cy="667.7" r="5" fill="#fefefe"/><circle cx="1180" cy="670.2" r="5.1" fill="#fefefe"/><circle cx="1177.3" cy="671.2" r="3.6" fill="#fefefe"/><circle cx="1171.8" cy="673.8" r="4.8" fill="#fefefe"/><circle cx="1170.4" cy="677" r="4.9" fill="#fefefe"/><circle cx="1165.2" cy="678.5" r="3.7" fill="#fefefe"/><circle cx="1160.5" cy="679.7" r="4.4" fill="#fefefe"/><circle cx="1155.9" cy="683.1" r="3.9" fill="#fefefe"/><circle cx="1153.2" cy="684.3" r="5" fill="#fefefe"/><circle cx="1147.4" cy="684.8" r="3.5" fill="#fefefe"/><circle cx="1143.4" cy="687.4" r="4.6" fill="#fefefe"/><circle cx="1140.1" cy="689.8" r="2.7" fill="#fefefe"/><circle cx="1137.7" cy="691.8" r="3.7" fill="#fefefe"/><circle cx="1133" cy="694.2" r="3.2" fill="#fefefe"/><circle cx="1129.6" cy="693.3" r="4.1" fill="#fefefe"/></g>
<g><circle cx="1100" cy="550.7" r="2.4" fill="#cfcedd"/><circle cx="1104.2" cy="549.7" r="2.4" fill="#cfcedd"/><circle cx="1108.4" cy="549.5" r="1.8" fill="#cfcedd"/><circle cx="1111.9" cy="548.6" r="3.2" fill="#cfcedd"/><circle cx="1117.6" cy="549" r="1.5" fill="#cfcedd"/><circle cx="1122.2" cy="549.3" r="1.4" fill="#cfcedd"/><circle cx="1125.8" cy="547.4" r="2.9" fill="#cfcedd"/><circle cx="1129.9" cy="546.9" r="1.4" fill="#cfcedd"/><circle cx="1133.7" cy="546.6" r="1.8" fill="#cfcedd"/><circle cx="1138.5" cy="548" r="2.4" fill="#cfcedd"/><circle cx="1143.3" cy="547.1" r="2.6" fill="#cfcedd"/><circle cx="1147.3" cy="546.4" r="2.9" fill="#cfcedd"/><circle cx="1152.7" cy="547.2" r="3.7" fill="#cfcedd"/><circle cx="1155.8" cy="545.8" r="3" fill="#cfcedd"/><circle cx="1159.6" cy="546.6" r="2" fill="#cfcedd"/><circle cx="1100.7" cy="546.6" r="2.7" fill="#fefefe"/><circle cx="1105" cy="545.1" r="4.4" fill="#fefefe"/><circle cx="1109.5" cy="546.2" r="2.1" fill="#fefefe"/><circle cx="1112.2" cy="544.8" r="4.4" fill="#fefefe"/><circle cx="1117.7" cy="545.1" r="3.4" fill="#fefefe"/><circle cx="1120.6" cy="546.9" r="1.8" fill="#fefefe"/><circle cx="1124.3" cy="544.4" r="3.8" fill="#fefefe"/><circle cx="1128.4" cy="545.8" r="1.8" fill="#fefefe"/><circle cx="1134.3" cy="544.5" r="2" fill="#fefefe"/><circle cx="1139.2" cy="543.3" r="2.1" fill="#fefefe"/><circle cx="1141.7" cy="543.9" r="3.4" fill="#fefefe"/><circle cx="1146.5" cy="545.3" r="2.1" fill="#fefefe"/><circle cx="1151" cy="544.8" r="3.9" fill="#fefefe"/><circle cx="1155.7" cy="544.5" r="2.1" fill="#fefefe"/><circle cx="1159.2" cy="544.6" r="3.4" fill="#fefefe"/></g>
<g><circle cx="1196.2" cy="544.1" r="2.5" fill="#cfcedd"/><circle cx="1199" cy="543.3" r="1.7" fill="#cfcedd"/><circle cx="1204.8" cy="543.6" r="2" fill="#cfcedd"/><circle cx="1208.4" cy="543.3" r="2.8" fill="#cfcedd"/><circle cx="1212.3" cy="542" r="1.7" fill="#cfcedd"/><circle cx="1215.7" cy="543" r="3.5" fill="#cfcedd"/><circle cx="1221.1" cy="541.8" r="1.5" fill="#cfcedd"/><circle cx="1225.3" cy="540.9" r="2.3" fill="#cfcedd"/><circle cx="1229.6" cy="541.2" r="1.5" fill="#cfcedd"/><circle cx="1234" cy="541.4" r="1.5" fill="#cfcedd"/><circle cx="1237" cy="539.1" r="1.6" fill="#cfcedd"/><circle cx="1241.6" cy="538.5" r="2.1" fill="#cfcedd"/><circle cx="1244.6" cy="537.8" r="3" fill="#cfcedd"/><circle cx="1249.2" cy="537.7" r="3.3" fill="#cfcedd"/><circle cx="1253.6" cy="536.4" r="2.8" fill="#cfcedd"/><circle cx="1258.4" cy="536.3" r="1.4" fill="#cfcedd"/><circle cx="1262.6" cy="533.7" r="3.7" fill="#cfcedd"/><circle cx="1266.9" cy="533.1" r="2.2" fill="#cfcedd"/><circle cx="1270.3" cy="531.2" r="1.6" fill="#cfcedd"/><circle cx="1275.7" cy="530.2" r="2.5" fill="#cfcedd"/><circle cx="1196.7" cy="540.7" r="1.6" fill="#fefefe"/><circle cx="1199" cy="540.4" r="3.1" fill="#fefefe"/><circle cx="1204.8" cy="539.1" r="2.7" fill="#fefefe"/><circle cx="1207.1" cy="540.6" r="3.1" fill="#fefefe"/><circle cx="1211.6" cy="539.3" r="1.6" fill="#fefefe"/><circle cx="1215.1" cy="539.4" r="3.4" fill="#fefefe"/><circle cx="1219.9" cy="539.1" r="2.1" fill="#fefefe"/><circle cx="1224.2" cy="540.3" r="4.4" fill="#fefefe"/><circle cx="1229.7" cy="537.9" r="2" fill="#fefefe"/><circle cx="1233.4" cy="538.9" r="2.1" fill="#fefefe"/><circle cx="1236.1" cy="537.8" r="1.5" fill="#fefefe"/><circle cx="1240.2" cy="534.8" r="2.5" fill="#fefefe"/><circle cx="1245.5" cy="537.1" r="1.6" fill="#fefefe"/><circle cx="1248.7" cy="533.7" r="4.5" fill="#fefefe"/><circle cx="1253.8" cy="534.8" r="2.5" fill="#fefefe"/><circle cx="1256.4" cy="532.6" r="3.4" fill="#fefefe"/><circle cx="1261.9" cy="530.5" r="2.9" fill="#fefefe"/><circle cx="1267" cy="528.9" r="4.3" fill="#fefefe"/><circle cx="1271.2" cy="528" r="2.4" fill="#fefefe"/><circle cx="1274.4" cy="528" r="4.3" fill="#fefefe"/></g>
<g><circle cx="1133.8" cy="387.8" r="1.5" fill="#cfcedd"/><circle cx="1137.1" cy="388.1" r="2.9" fill="#cfcedd"/><circle cx="1141.4" cy="390.4" r="1.3" fill="#cfcedd"/><circle cx="1146.3" cy="390.6" r="1.2" fill="#cfcedd"/><circle cx="1133.8" cy="386.2" r="1.9" fill="#fefefe"/><circle cx="1136.8" cy="385.8" r="2.8" fill="#fefefe"/><circle cx="1143.6" cy="388.6" r="1.4" fill="#fefefe"/><circle cx="1147.7" cy="389.7" r="3.4" fill="#fefefe"/></g>
<path d="M1243 365 C 1279.7 376.9, 1323.1 346, 1324 312 C 1295.8 304.2, 1250.1 331.7, 1243 365 Z" fill="url(#lf)"/>
<path d="M1243 365 L1324 312" stroke="#c79b55" stroke-width="1" opacity=".7"/>
<path d="M1324 312 C 1335 308, 1345 307, 1352 306" stroke="#b08a48" stroke-width="1.8" fill="none"/>
<path d="M1150 443 C 1170.6 451.2, 1201.5 436.5, 1207 418 C 1191 412.4, 1159.2 425.2, 1150 443 Z" fill="url(#lf2)"/>
<path d="M1150 443 L1207 418" stroke="#c79b55" stroke-width="1" opacity=".7"/>
<path d="M1040 640 C 1081.3 643.4, 1110.8 602.4, 1097 568 C 1065.8 566.7, 1032.6 604.9, 1040 640 Z" fill="url(#lf)"/>
<path d="M1040 640 L1097 568" stroke="#c79b55" stroke-width="1" opacity=".7"/>
<path d="M1097 568 C 1102 562, 1106 558, 1110 554" stroke="#b08a48" stroke-width="1.6" fill="none"/>
<path d="M1470 503 L1469.7 511.9 L1468.6 518.6 L1466.9 524.5 L1464.5 529.7 L1461.4 534.3 L1457.7 538.4 L1453.3 541.9 L1448.4 544.8 L1442.8 547.1 L1436.6 548.7 L1429.5 549.7 L1420 550 L1410.5 549.7 L1403.4 548.7 L1397.2 547.1 L1391.6 544.8 L1386.7 541.9 L1382.3 538.4 L1378.6 534.3 L1375.5 529.7 L1373.1 524.5 L1371.4 518.6 L1370.3 511.9 L1370 503 L1370.3 494.1 L1371.4 487.4 L1373.1 481.5 L1375.5 476.3 L1378.6 471.7 L1382.3 467.6 L1386.7 464.1 L1391.6 461.2 L1397.2 458.9 L1403.4 457.3 L1410.5 456.3 L1420 456 L1429.5 456.3 L1436.6 457.3 L1442.8 458.9 L1448.4 461.2 L1453.3 464.1 L1457.7 467.6 L1461.4 471.7 L1464.5 476.3 L1466.9 481.5 L1468.6 487.4 L1469.7 494.1Z" fill="url(#pg)"/>
<path d="M1389 498.3 C 1390 470.1, 1417.5 465.4, 1422.5 486.6 C 1417.5 514.8, 1397.5 521.8, 1389 498.3 Z" fill="#f7ad62" opacity=".45"/>
<path d="M1435 467.8 C 1467.5 479.5, 1470 526.5, 1437.5 546.2 C 1455 517.1, 1452.5 488.9, 1435 467.8 Z" fill="#d8432a" opacity=".35"/>
<ellipse cx="1410" cy="539.7" rx="3.6" ry="2" fill="#b8201c"/>
<g><circle cx="1412.3" cy="482" r="5.1" fill="#e6e5ee"/><circle cx="1415.8" cy="483.5" r="4.5" fill="#e6e5ee"/><circle cx="1420.2" cy="483.4" r="3.9" fill="#e6e5ee"/><circle cx="1426.2" cy="481.6" r="4" fill="#e6e5ee"/><circle cx="1430.7" cy="484.7" r="4" fill="#e6e5ee"/><circle cx="1411.9" cy="480.5" r="6.9" fill="#fff"/><circle cx="1417.8" cy="478.1" r="6.9" fill="#fff"/><circle cx="1420.2" cy="479.3" r="4.9" fill="#fff"/><circle cx="1425.1" cy="476.9" r="4.9" fill="#fff"/><circle cx="1432.3" cy="478.7" r="5.8" fill="#fff"/></g>
<g transform="translate(1422,472) scale(1.1)">
<path d="M-2 0 C -14 -8, -24 -4, -28 4 C -18 8, -8 8, -2 0Z" fill="#8a7a3a"/>
<path d="M2 0 C 10 -12, 24 -10, 30 -2 C 22 8, 10 8, 2 0Z" fill="#c9a24a"/>
<path d="M0 -2 C -6 -14, 2 -22, 10 -22 C 12 -12, 8 -4, 0 -2Z" fill="#c9a24a"/>
</g>
<circle cx="1406.4" cy="487.8" r="1.2" fill="#ffe9b0"/>
<circle cx="1430.9" cy="507.3" r="1" fill="#ffe9b0"/>
<circle cx="1410.3" cy="483.6" r="1.1" fill="#ffe9b0"/>
<circle cx="1399.7" cy="491.7" r="1" fill="#ffe9b0"/>
<circle cx="1428.4" cy="475" r="1" fill="#ffe9b0"/>
<path d="M1430 375 L1429.7 383.2 L1428.6 389.3 L1426.9 394.6 L1424.6 399.4 L1421.6 403.7 L1417.9 407.4 L1413.7 410.6 L1408.8 413.2 L1403.4 415.3 L1397.3 416.8 L1390.3 417.7 L1381 418 L1371.7 417.7 L1364.7 416.8 L1358.6 415.3 L1353.2 413.2 L1348.3 410.6 L1344.1 407.4 L1340.4 403.7 L1337.4 399.4 L1335.1 394.6 L1333.4 389.3 L1332.3 383.2 L1332 375 L1332.3 366.8 L1333.4 360.7 L1335.1 355.4 L1337.4 350.6 L1340.4 346.3 L1344.1 342.6 L1348.3 339.4 L1353.2 336.8 L1358.6 334.7 L1364.7 333.2 L1371.7 332.3 L1381 332 L1390.3 332.3 L1397.3 333.2 L1403.4 334.7 L1408.8 336.8 L1413.7 339.4 L1417.9 342.6 L1421.6 346.3 L1424.6 350.6 L1426.9 355.4 L1428.6 360.7 L1429.7 366.8Z" fill="url(#pg)"/>
<path d="M1350.6 370.7 C 1351.6 344.9, 1378.5 340.6, 1383.5 359.9 C 1378.5 385.8, 1359 392.2, 1350.6 370.7 Z" fill="#f7ad62" opacity=".45"/>
<path d="M1395.7 342.8 C 1427.5 353.5, 1430 396.5, 1398.2 414.6 C 1415.3 387.9, 1412.8 362.1, 1395.7 342.8 Z" fill="#d8432a" opacity=".35"/>
<ellipse cx="1371.2" cy="408.5" rx="3.6" ry="2" fill="#b8201c"/>
<g><circle cx="1353.3" cy="341.4" r="11.2" fill="#e6e5ee"/><circle cx="1361.1" cy="340.4" r="11.4" fill="#e6e5ee"/><circle cx="1365.8" cy="341" r="10.9" fill="#e6e5ee"/><circle cx="1373" cy="341.2" r="9.5" fill="#e6e5ee"/><circle cx="1382.2" cy="342.3" r="10.5" fill="#e6e5ee"/><circle cx="1390.2" cy="340.5" r="10.8" fill="#e6e5ee"/><circle cx="1396.2" cy="341.6" r="10.3" fill="#e6e5ee"/><circle cx="1404.4" cy="343.1" r="10.3" fill="#e6e5ee"/><circle cx="1353.7" cy="332.2" r="12.6" fill="#fff"/><circle cx="1360.7" cy="333.9" r="12.9" fill="#fff"/><circle cx="1366.4" cy="329.9" r="12.5" fill="#fff"/><circle cx="1372.5" cy="329.3" r="11" fill="#fff"/><circle cx="1380" cy="327.7" r="12.8" fill="#fff"/><circle cx="1387.2" cy="329.3" r="11.6" fill="#fff"/><circle cx="1397.3" cy="330.3" r="11.8" fill="#fff"/><circle cx="1403.2" cy="335.5" r="12.9" fill="#fff"/></g>
<g transform="translate(1398,326) scale(0.8)">
<path d="M-2 0 C -14 -8, -24 -4, -28 4 C -18 8, -8 8, -2 0Z" fill="#8a7a3a"/>
<path d="M2 0 C 10 -12, 24 -10, 30 -2 C 22 8, 10 8, 2 0Z" fill="#c9a24a"/>
<path d="M0 -2 C -6 -14, 2 -22, 10 -22 C 12 -12, 8 -4, 0 -2Z" fill="#c9a24a"/>
</g>
<circle cx="1392.8" cy="363.1" r="1.1" fill="#ffe9b0"/>
<circle cx="1358.4" cy="399.4" r="1.6" fill="#ffe9b0"/>
<circle cx="1389.7" cy="385.7" r="1" fill="#ffe9b0"/>
<circle cx="1383.5" cy="396" r="1.3" fill="#ffe9b0"/>
<circle cx="1380.2" cy="383.7" r="1.1" fill="#ffe9b0"/>
<path d="M1309 482 L1308.6 490.5 L1307.5 496.9 L1305.7 502.5 L1303.2 507.6 L1300 512 L1296.2 515.9 L1291.7 519.3 L1286.5 522 L1280.7 524.2 L1274.3 525.7 L1266.9 526.7 L1257 527 L1247.1 526.7 L1239.7 525.7 L1233.3 524.2 L1227.5 522 L1222.3 519.3 L1217.8 515.9 L1214 512 L1210.8 507.6 L1208.3 502.5 L1206.5 496.9 L1205.4 490.5 L1205 482 L1205.4 473.5 L1206.5 467.1 L1208.3 461.5 L1210.8 456.4 L1214 452 L1217.8 448.1 L1222.3 444.7 L1227.5 442 L1233.3 439.8 L1239.7 438.3 L1247.1 437.3 L1257 437 L1266.9 437.3 L1274.3 438.3 L1280.7 439.8 L1286.5 442 L1291.7 444.7 L1296.2 448.1 L1300 452 L1303.2 456.4 L1305.7 461.5 L1307.5 467.1 L1308.6 473.5Z" fill="url(#pg)"/>
<path d="M1224.8 477.5 C 1225.8 450.5, 1254.4 446, 1259.6 466.2 C 1254.4 493.2, 1233.6 500, 1224.8 477.5 Z" fill="#f7ad62" opacity=".45"/>
<path d="M1272.6 448.2 C 1306.4 459.5, 1309 504.5, 1275.2 523.4 C 1293.4 495.5, 1290.8 468.5, 1272.6 448.2 Z" fill="#d8432a" opacity=".35"/>
<ellipse cx="1246.6" cy="517.1" rx="3.6" ry="2" fill="#b8201c"/>
<g><circle cx="1229.5" cy="449.5" r="11.3" fill="#e6e5ee"/><circle cx="1237.8" cy="449.3" r="10.6" fill="#e6e5ee"/><circle cx="1244.7" cy="447.5" r="11.2" fill="#e6e5ee"/><circle cx="1252.1" cy="450.8" r="11" fill="#e6e5ee"/><circle cx="1257.6" cy="448.9" r="9.6" fill="#e6e5ee"/><circle cx="1265.5" cy="447.5" r="9.5" fill="#e6e5ee"/><circle cx="1270.8" cy="447.9" r="10.1" fill="#e6e5ee"/><circle cx="1277.2" cy="447.3" r="9.7" fill="#e6e5ee"/><circle cx="1284.4" cy="448.7" r="9.5" fill="#e6e5ee"/><circle cx="1231.5" cy="442.5" r="10.9" fill="#fff"/><circle cx="1236" cy="439.6" r="11.6" fill="#fff"/><circle cx="1242.5" cy="440.1" r="13.4" fill="#fff"/><circle cx="1250.9" cy="437.6" r="10.7" fill="#fff"/><circle cx="1256.4" cy="436.7" r="11.3" fill="#fff"/><circle cx="1266.3" cy="436.3" r="10.5" fill="#fff"/><circle cx="1273.8" cy="438.8" r="10.9" fill="#fff"/><circle cx="1279.2" cy="438.3" r="12" fill="#fff"/><circle cx="1287.9" cy="443.5" r="12.5" fill="#fff"/></g>
<g transform="translate(1270,438) scale(0.8)">
<path d="M-2 0 C -14 -8, -24 -4, -28 4 C -18 8, -8 8, -2 0Z" fill="#8a7a3a"/>
<path d="M2 0 C 10 -12, 24 -10, 30 -2 C 22 8, 10 8, 2 0Z" fill="#c9a24a"/>
<path d="M0 -2 C -6 -14, 2 -22, 10 -22 C 12 -12, 8 -4, 0 -2Z" fill="#c9a24a"/>
</g>
<circle cx="1255.5" cy="500.9" r="0.9" fill="#ffe9b0"/>
<circle cx="1260.6" cy="458.8" r="1.4" fill="#ffe9b0"/>
<circle cx="1248.7" cy="495.2" r="1.4" fill="#ffe9b0"/>
<circle cx="1293.8" cy="478.9" r="1.4" fill="#ffe9b0"/>
<circle cx="1270.9" cy="455.6" r="1" fill="#ffe9b0"/>
<path d="M1230 603 L1229.7 610.8 L1228.6 616.6 L1226.9 621.7 L1224.5 626.3 L1221.4 630.3 L1217.7 633.9 L1213.3 636.9 L1208.4 639.5 L1202.8 641.4 L1196.6 642.9 L1189.5 643.7 L1180 644 L1170.5 643.7 L1163.4 642.9 L1157.2 641.4 L1151.6 639.5 L1146.7 636.9 L1142.3 633.9 L1138.6 630.3 L1135.5 626.3 L1133.1 621.7 L1131.4 616.6 L1130.3 610.8 L1130 603 L1130.3 595.2 L1131.4 589.4 L1133.1 584.3 L1135.5 579.7 L1138.6 575.7 L1142.3 572.1 L1146.7 569.1 L1151.6 566.5 L1157.2 564.6 L1163.4 563.1 L1170.5 562.3 L1180 562 L1189.5 562.3 L1196.6 563.1 L1202.8 564.6 L1208.4 566.5 L1213.3 569.1 L1217.7 572.1 L1221.4 575.7 L1224.5 579.7 L1226.9 584.3 L1228.6 589.4 L1229.7 595.2Z" fill="url(#pg)"/>
<path d="M1149 598.9 C 1150 574.3, 1177.5 570.2, 1182.5 588.6 C 1177.5 613.2, 1157.5 619.4, 1149 598.9 Z" fill="#f7ad62" opacity=".45"/>
<path d="M1195 572.2 C 1227.5 582.5, 1230 623.5, 1197.5 640.7 C 1215 615.3, 1212.5 590.7, 1195 572.2 Z" fill="#d8432a" opacity=".35"/>
<ellipse cx="1170" cy="635" rx="3.6" ry="2" fill="#b8201c"/>
<g><circle cx="1146.1" cy="574.1" r="8.7" fill="#e6e5ee"/><circle cx="1151" cy="573.8" r="9.1" fill="#e6e5ee"/><circle cx="1160.5" cy="576.5" r="9.5" fill="#e6e5ee"/><circle cx="1168.3" cy="576.7" r="10.5" fill="#e6e5ee"/><circle cx="1172.9" cy="573.6" r="9.1" fill="#e6e5ee"/><circle cx="1179.1" cy="573.5" r="9.8" fill="#e6e5ee"/><circle cx="1188.7" cy="576.1" r="9.6" fill="#e6e5ee"/><circle cx="1194.6" cy="575.9" r="8.8" fill="#e6e5ee"/><circle cx="1146.6" cy="569.6" r="11.9" fill="#fff"/><circle cx="1153.9" cy="566" r="10.1" fill="#fff"/><circle cx="1160.9" cy="564" r="11.9" fill="#fff"/><circle cx="1168.5" cy="563.4" r="10.7" fill="#fff"/><circle cx="1175.2" cy="564.7" r="10.1" fill="#fff"/><circle cx="1178.8" cy="563.2" r="12.3" fill="#fff"/><circle cx="1188.4" cy="564.7" r="12" fill="#fff"/><circle cx="1195.9" cy="568.6" r="10.6" fill="#fff"/></g>
<g transform="translate(1192,560) scale(0.9)">
<path d="M-2 0 C -14 -8, -24 -4, -28 4 C -18 8, -8 8, -2 0Z" fill="#8a7a3a"/>
<path d="M2 0 C 10 -12, 24 -10, 30 -2 C 22 8, 10 8, 2 0Z" fill="#c9a24a"/>
<path d="M0 -2 C -6 -14, 2 -22, 10 -22 C 12 -12, 8 -4, 0 -2Z" fill="#c9a24a"/>
</g>
<circle cx="1166.7" cy="599.6" r="0.8" fill="#ffe9b0"/>
<circle cx="1209" cy="598.5" r="1.2" fill="#ffe9b0"/>
<circle cx="1201" cy="595.3" r="1.5" fill="#ffe9b0"/>
<circle cx="1187.5" cy="591.1" r="1" fill="#ffe9b0"/>
<circle cx="1175.4" cy="616.6" r="1.3" fill="#ffe9b0"/>
<path d="M1389 607 L1388.6 615.2 L1387.6 621.3 L1385.8 626.6 L1383.3 631.4 L1380.2 635.7 L1376.4 639.4 L1372 642.6 L1367 645.2 L1361.3 647.3 L1354.9 648.8 L1347.7 649.7 L1338 650 L1328.3 649.7 L1321.1 648.8 L1314.7 647.3 L1309 645.2 L1304 642.6 L1299.6 639.4 L1295.8 635.7 L1292.7 631.4 L1290.2 626.6 L1288.4 621.3 L1287.4 615.2 L1287 607 L1287.4 598.8 L1288.4 592.7 L1290.2 587.4 L1292.7 582.6 L1295.8 578.3 L1299.6 574.6 L1304 571.4 L1309 568.8 L1314.7 566.7 L1321.1 565.2 L1328.3 564.3 L1338 564 L1347.7 564.3 L1354.9 565.2 L1361.3 566.7 L1367 568.8 L1372 571.4 L1376.4 574.6 L1380.2 578.3 L1383.3 582.6 L1385.8 587.4 L1387.6 592.7 L1388.6 598.8Z" fill="url(#pg)"/>
<path d="M1306.4 602.7 C 1307.4 576.9, 1335.5 572.6, 1340.5 592 C 1335.5 617.8, 1315 624.2, 1306.4 602.7 Z" fill="#f7ad62" opacity=".45"/>
<path d="M1353.3 574.8 C 1386.5 585.5, 1389 628.5, 1355.8 646.6 C 1373.7 619.9, 1371.2 594.1, 1353.3 574.8 Z" fill="#d8432a" opacity=".35"/>
<ellipse cx="1327.8" cy="640.5" rx="3.6" ry="2" fill="#b8201c"/>
<g><circle cx="1327" cy="583.3" r="7.3" fill="#e6e5ee"/><circle cx="1336.5" cy="583" r="7.9" fill="#e6e5ee"/><circle cx="1342" cy="585.2" r="7.8" fill="#e6e5ee"/><circle cx="1350.2" cy="583.6" r="8.1" fill="#e6e5ee"/><circle cx="1355.5" cy="581.7" r="7.9" fill="#e6e5ee"/><circle cx="1361" cy="581.6" r="8.6" fill="#e6e5ee"/><circle cx="1367.8" cy="583.5" r="8.5" fill="#e6e5ee"/><circle cx="1376.2" cy="582.9" r="8" fill="#e6e5ee"/><circle cx="1328.2" cy="579.1" r="8" fill="#fff"/><circle cx="1335.1" cy="575.4" r="8.5" fill="#fff"/><circle cx="1342.8" cy="575.2" r="9.4" fill="#fff"/><circle cx="1349.6" cy="576.1" r="9" fill="#fff"/><circle cx="1355.9" cy="574.5" r="9.2" fill="#fff"/><circle cx="1363.1" cy="575" r="9.3" fill="#fff"/><circle cx="1369.1" cy="578.2" r="9.8" fill="#fff"/><circle cx="1377.5" cy="579.8" r="8.5" fill="#fff"/></g>
<g transform="translate(1337,562) scale(1.1)">
<path d="M-2 0 C -14 -8, -24 -4, -28 4 C -18 8, -8 8, -2 0Z" fill="#8a7a3a"/>
<path d="M2 0 C 10 -12, 24 -10, 30 -2 C 22 8, 10 8, 2 0Z" fill="#c9a24a"/>
<path d="M0 -2 C -6 -14, 2 -22, 10 -22 C 12 -12, 8 -4, 0 -2Z" fill="#c9a24a"/>
</g>
<circle cx="1301.6" cy="595" r="1.5" fill="#ffe9b0"/>
<circle cx="1347.1" cy="615.9" r="1.2" fill="#ffe9b0"/>
<circle cx="1353.8" cy="613.5" r="0.9" fill="#ffe9b0"/>
<circle cx="1321.4" cy="581.8" r="1.5" fill="#ffe9b0"/>
<circle cx="1356.2" cy="629.3" r="1.3" fill="#ffe9b0"/>
<path d="M1313 688 L1312.6 696.2 L1311.6 702.3 L1309.8 707.6 L1307.3 712.4 L1304.2 716.7 L1300.4 720.4 L1296 723.6 L1291 726.2 L1285.3 728.3 L1278.9 729.8 L1271.7 730.7 L1262 731 L1252.3 730.7 L1245.1 729.8 L1238.7 728.3 L1233 726.2 L1228 723.6 L1223.6 720.4 L1219.8 716.7 L1216.7 712.4 L1214.2 707.6 L1212.4 702.3 L1211.4 696.2 L1211 688 L1211.4 679.8 L1212.4 673.7 L1214.2 668.4 L1216.7 663.6 L1219.8 659.3 L1223.6 655.6 L1228 652.4 L1233 649.8 L1238.7 647.7 L1245.1 646.2 L1252.3 645.3 L1262 645 L1271.7 645.3 L1278.9 646.2 L1285.3 647.7 L1291 649.8 L1296 652.4 L1300.4 655.6 L1304.2 659.3 L1307.3 663.6 L1309.8 668.4 L1311.6 673.7 L1312.6 679.8Z" fill="url(#pg)"/>
<path d="M1230.4 683.7 C 1231.4 657.9, 1259.5 653.6, 1264.5 673 C 1259.5 698.8, 1239 705.2, 1230.4 683.7 Z" fill="#f7ad62" opacity=".45"/>
<path d="M1277.3 655.8 C 1310.5 666.5, 1313 709.5, 1279.8 727.6 C 1297.7 700.9, 1295.2 675.1, 1277.3 655.8 Z" fill="#d8432a" opacity=".35"/>
<ellipse cx="1251.8" cy="721.5" rx="3.6" ry="2" fill="#b8201c"/>
<g><circle cx="1244.6" cy="662.6" r="8.1" fill="#e6e5ee"/><circle cx="1250.9" cy="662.9" r="7" fill="#e6e5ee"/><circle cx="1257.9" cy="663" r="7.9" fill="#e6e5ee"/><circle cx="1262.6" cy="660.8" r="7.2" fill="#e6e5ee"/><circle cx="1269.4" cy="659.8" r="6.8" fill="#e6e5ee"/><circle cx="1246.9" cy="654.1" r="8.4" fill="#fff"/><circle cx="1251.8" cy="651.8" r="7.8" fill="#fff"/><circle cx="1258.5" cy="652.8" r="7" fill="#fff"/><circle cx="1265.9" cy="654.9" r="9.7" fill="#fff"/><circle cx="1268.4" cy="655.1" r="6.9" fill="#fff"/></g>
<g transform="translate(1262,645) scale(1.2)">
<path d="M-2 0 C -14 -8, -24 -4, -28 4 C -18 8, -8 8, -2 0Z" fill="#8a7a3a"/>
<path d="M2 0 C 10 -12, 24 -10, 30 -2 C 22 8, 10 8, 2 0Z" fill="#c9a24a"/>
<path d="M0 -2 C -6 -14, 2 -22, 10 -22 C 12 -12, 8 -4, 0 -2Z" fill="#c9a24a"/>
</g>
<circle cx="1265.3" cy="672.7" r="0.9" fill="#ffe9b0"/>
<circle cx="1228.4" cy="703.1" r="1.5" fill="#ffe9b0"/>
<circle cx="1261.2" cy="700.4" r="1.5" fill="#ffe9b0"/>
<circle cx="1233.4" cy="676.6" r="0.9" fill="#ffe9b0"/>
<circle cx="1291.2" cy="697.3" r="1.1" fill="#ffe9b0"/>
<circle cx="1288" cy="664" r="6" fill="#f4f2f6"/>
<path d="M1195 767 L1194.6 775 L1193.5 780.9 L1191.7 786.2 L1189.2 790.9 L1186 795 L1182.2 798.7 L1177.7 801.8 L1172.5 804.3 L1166.7 806.4 L1160.3 807.8 L1152.9 808.7 L1143 809 L1133.1 808.7 L1125.7 807.8 L1119.3 806.4 L1113.5 804.3 L1108.3 801.8 L1103.8 798.7 L1100 795 L1096.8 790.9 L1094.3 786.2 L1092.5 780.9 L1091.4 775 L1091 767 L1091.4 759 L1092.5 753.1 L1094.3 747.8 L1096.8 743.1 L1100 739 L1103.8 735.3 L1108.3 732.2 L1113.5 729.7 L1119.3 727.6 L1125.7 726.2 L1133.1 725.3 L1143 725 L1152.9 725.3 L1160.3 726.2 L1166.7 727.6 L1172.5 729.7 L1177.7 732.2 L1182.2 735.3 L1186 739 L1189.2 743.1 L1191.7 747.8 L1193.5 753.1 L1194.6 759Z" fill="url(#pg)"/>
<path d="M1110.8 762.8 C 1111.8 737.6, 1140.4 733.4, 1145.6 752.3 C 1140.4 777.5, 1119.6 783.8, 1110.8 762.8 Z" fill="#f7ad62" opacity=".45"/>
<path d="M1158.6 735.5 C 1192.4 746, 1195 788, 1161.2 805.6 C 1179.4 779.6, 1176.8 754.4, 1158.6 735.5 Z" fill="#d8432a" opacity=".35"/>
<ellipse cx="1132.6" cy="799.8" rx="3.6" ry="2" fill="#b8201c"/>
<g><circle cx="1108.3" cy="737.2" r="6.7" fill="#e6e5ee"/><circle cx="1117.6" cy="733.8" r="7.1" fill="#e6e5ee"/><circle cx="1121.1" cy="736.9" r="6.3" fill="#e6e5ee"/><circle cx="1128.6" cy="735.7" r="7.3" fill="#e6e5ee"/><circle cx="1134.7" cy="734" r="6.5" fill="#e6e5ee"/><circle cx="1141" cy="733.9" r="5.7" fill="#e6e5ee"/><circle cx="1108.2" cy="729.8" r="6.8" fill="#fff"/><circle cx="1115.6" cy="730.3" r="6.7" fill="#fff"/><circle cx="1122.8" cy="727" r="6.9" fill="#fff"/><circle cx="1127.3" cy="727.3" r="5.9" fill="#fff"/><circle cx="1136.5" cy="729.5" r="6.4" fill="#fff"/><circle cx="1141.9" cy="732.7" r="6.2" fill="#fff"/></g>
<g transform="translate(1154,724) scale(1)">
<path d="M-2 0 C -14 -8, -24 -4, -28 4 C -18 8, -8 8, -2 0Z" fill="#8a7a3a"/>
<path d="M2 0 C 10 -12, 24 -10, 30 -2 C 22 8, 10 8, 2 0Z" fill="#c9a24a"/>
<path d="M0 -2 C -6 -14, 2 -22, 10 -22 C 12 -12, 8 -4, 0 -2Z" fill="#c9a24a"/>
</g>
<circle cx="1153" cy="749.5" r="1.2" fill="#ffe9b0"/>
<circle cx="1154.4" cy="751.2" r="1.2" fill="#ffe9b0"/>
<circle cx="1127.3" cy="736.4" r="1.1" fill="#ffe9b0"/>
<circle cx="1159" cy="744.2" r="1.3" fill="#ffe9b0"/>
<circle cx="1125.5" cy="776.7" r="0.8" fill="#ffe9b0"/>
<circle cx="1183" cy="734" r="8" fill="#f4f2f6"/><circle cx="1176" cy="742" r="6" fill="#fff"/>
<path d="M1071 1052 L1070.7 1058.8 L1069.8 1063.9 L1068.2 1068.4 L1066.1 1072.4 L1063.4 1076 L1060.2 1079.1 L1056.3 1081.8 L1052 1084 L1047.1 1085.7 L1041.6 1087 L1035.3 1087.7 L1027 1088 L1018.7 1087.7 L1012.4 1087 L1006.9 1085.7 L1002 1084 L997.7 1081.8 L993.8 1079.1 L990.6 1076 L987.9 1072.4 L985.8 1068.4 L984.2 1063.9 L983.3 1058.8 L983 1052 L983.3 1045.2 L984.2 1040.1 L985.8 1035.6 L987.9 1031.6 L990.6 1028 L993.8 1024.9 L997.7 1022.2 L1002 1020 L1006.9 1018.3 L1012.4 1017 L1018.7 1016.3 L1027 1016 L1035.3 1016.3 L1041.6 1017 L1047.1 1018.3 L1052 1020 L1056.3 1022.2 L1060.2 1024.9 L1063.4 1028 L1066.1 1031.6 L1068.2 1035.6 L1069.8 1040.1 L1070.7 1045.2Z" fill="url(#pg2)"/>
<path d="M999.7 1048.4 C 1000.6 1026.8, 1024.8 1023.2, 1029.2 1039.4 C 1024.8 1061, 1007.2 1066.4, 999.7 1048.4 Z" fill="#f7ad62" opacity=".45"/>
<path d="M1040.2 1025 C 1068.8 1034, 1071 1070, 1042.4 1085.1 C 1057.8 1062.8, 1055.6 1041.2, 1040.2 1025 Z" fill="#d8432a" opacity=".35"/>
<circle cx="1034.3" cy="1058.4" r="1.4" fill="#ffe9b0"/>
<circle cx="1026.5" cy="1062.7" r="0.9" fill="#ffe9b0"/>
<circle cx="1044.2" cy="1030.1" r="1.3" fill="#ffe9b0"/>
<circle cx="1024" cy="1064.2" r="1" fill="#ffe9b0"/>
<circle cx="1014.5" cy="1054.7" r="1.2" fill="#ffe9b0"/>
<g><path d="M1004 1016 C 1012 1010, 1022 1014, 1028 1022 C 1020 1030, 1008 1028, 1004 1016Z" fill="#b39a6c"/><path d="M1030 1022 C 1036 1012, 1046 1008, 1054 1010 C 1056 1020, 1048 1028, 1034 1030Z" fill="#c6b084"/><path d="M1000 1014 l8 2 M1052 1008 l4 4" stroke="#4a3226" stroke-width="2"/></g>
<g><circle cx="1022.1" cy="1028.8" r="6.5" fill="#fff"/><circle cx="1027.7" cy="1024.6" r="6.5" fill="#fff"/><circle cx="1031.2" cy="1024.4" r="3.6" fill="#fff"/><circle cx="1036" cy="1025.5" r="5.1" fill="#fff"/><circle cx="1039.8" cy="1027" r="3.6" fill="#fff"/></g>
<path d="M1026 1024 C 1024 1016, 1021 1010, 1016 1006" stroke="#4a2a22" stroke-width="3" fill="none" stroke-linecap="round"/>
<path d="M1388.5 1063 L1388.2 1069.7 L1387.2 1074.8 L1385.6 1079.2 L1383.3 1083.2 L1380.5 1086.7 L1377 1089.8 L1373 1092.4 L1368.4 1094.6 L1363.2 1096.3 L1357.4 1097.5 L1350.8 1098.3 L1342 1098.5 L1333.2 1098.3 L1326.6 1097.5 L1320.8 1096.3 L1315.6 1094.6 L1311 1092.4 L1307 1089.8 L1303.5 1086.7 L1300.7 1083.2 L1298.4 1079.2 L1296.8 1074.8 L1295.8 1069.7 L1295.5 1063 L1295.8 1056.3 L1296.8 1051.2 L1298.4 1046.8 L1300.7 1042.8 L1303.5 1039.3 L1307 1036.2 L1311 1033.6 L1315.6 1031.4 L1320.8 1029.7 L1326.6 1028.5 L1333.2 1027.7 L1342 1027.5 L1350.8 1027.7 L1357.4 1028.5 L1363.2 1029.7 L1368.4 1031.4 L1373 1033.6 L1377 1036.2 L1380.5 1039.3 L1383.3 1042.8 L1385.6 1046.8 L1387.2 1051.2 L1388.2 1056.3Z" fill="url(#pg2)"/>
<path d="M1313.2 1059.5 C 1314.1 1038.2, 1339.7 1034.6, 1344.3 1050.6 C 1339.7 1071.9, 1321.1 1077.2, 1313.2 1059.5 Z" fill="#f7ad62" opacity=".45"/>
<path d="M1356 1036.4 C 1386.2 1045.2, 1388.5 1080.8, 1358.3 1095.7 C 1374.5 1073.7, 1372.2 1052.3, 1356 1036.4 Z" fill="#d8432a" opacity=".35"/>
<g><circle cx="1300.1" cy="1040.4" r="5.7" fill="#fff"/><circle cx="1304.7" cy="1038.4" r="5.4" fill="#fff"/><circle cx="1310.9" cy="1040" r="6.1" fill="#fff"/><circle cx="1318.5" cy="1041" r="6.6" fill="#fff"/><circle cx="1324.5" cy="1041.6" r="5.5" fill="#fff"/></g>
<circle cx="1355.4" cy="1062" r="1.4" fill="#ffe9b0"/>
<circle cx="1335.4" cy="1056.7" r="1.5" fill="#ffe9b0"/>
<circle cx="1362.8" cy="1050.1" r="1.4" fill="#ffe9b0"/>
<circle cx="1347" cy="1053.7" r="1.2" fill="#ffe9b0"/>
<circle cx="1309.4" cy="1062.4" r="1.4" fill="#ffe9b0"/>
<g><path d="M1340 1032 C 1328 1018, 1318 1012, 1318 1012 C 1316 1024, 1322 1036, 1340 1040Z" fill="#8a6a44"/><path d="M1338 1030 C 1340 1014, 1352 1008, 1366 1010 C 1372 1020, 1362 1032, 1344 1036Z" fill="#cdb88e"/><path d="M1332 1036 C 1344 1030, 1358 1034, 1366 1028 C 1362 1044, 1346 1050, 1332 1046Z" fill="#bda274"/><path d="M1322 1024 C 1330 1020, 1338 1024, 1342 1034 C 1334 1038, 1326 1034, 1322 1024Z" fill="#6e5236"/></g>
<g><circle cx="996.3" cy="1092.3" r="4.9" fill="#fff"/><circle cx="1002.1" cy="1092.4" r="2.9" fill="#fff"/><circle cx="1005.9" cy="1089.8" r="3.3" fill="#fff"/><circle cx="1012.5" cy="1092.3" r="3.9" fill="#fff"/><circle cx="1021" cy="1091.2" r="4.2" fill="#fff"/><circle cx="1026.8" cy="1088.6" r="4.6" fill="#fff"/><circle cx="1034.2" cy="1090.6" r="3.8" fill="#fff"/><circle cx="1040.2" cy="1089" r="4.4" fill="#fff"/><circle cx="1044.9" cy="1089.2" r="3" fill="#fff"/><circle cx="1053.2" cy="1090" r="4.4" fill="#fff"/><circle cx="1060.5" cy="1091.6" r="3.3" fill="#fff"/><circle cx="1064.9" cy="1092.7" r="4.5" fill="#fff"/><circle cx="1305.5" cy="1102.6" r="2.4" fill="#fff"/><circle cx="1310.3" cy="1100.6" r="4.4" fill="#fff"/><circle cx="1317.6" cy="1101.6" r="2.2" fill="#fff"/><circle cx="1323.2" cy="1100.1" r="4.2" fill="#fff"/><circle cx="1332.4" cy="1101.5" r="3.1" fill="#fff"/><circle cx="1338.4" cy="1100.5" r="3.6" fill="#fff"/><circle cx="1343.5" cy="1102.1" r="2.8" fill="#fff"/><circle cx="1353.6" cy="1102.4" r="2.2" fill="#fff"/><circle cx="1358.2" cy="1102" r="5.1" fill="#fff"/><circle cx="1364.8" cy="1100.1" r="2.8" fill="#fff"/><circle cx="1373.4" cy="1100.1" r="3.9" fill="#fff"/><circle cx="1376.9" cy="1101.7" r="5" fill="#fff"/><circle cx="1383.5" cy="1103.3" r="3.7" fill="#fff"/></g>
<path d="M1046 1096 C 1062 1082, 1085 1072, 1100 1073 C 1112 1078, 1126 1074, 1137 1070 C 1134 1084, 1122 1098, 1100 1104 C 1085 1108, 1075 1100, 1046 1096Z" fill="#b99a6c"/>
<path d="M1046 1096 C 1075 1100, 1085 1108, 1100 1104 C 1112 1101, 1122 1096, 1128 1088 C 1118 1100, 1100 1112, 1088 1110 C 1074 1106, 1060 1100, 1046 1096Z" fill="#d4602c"/>
<path d="M1060 1093 C 1085 1088, 1110 1082, 1130 1074" stroke="#8e7448" stroke-width="1" fill="none"/>
<ellipse cx="940" cy="1077" rx="9" ry="3.6" fill="#a8602a" transform="rotate(-6 940 1077)"/>
<ellipse cx="971" cy="1075" rx="4" ry="2" fill="#b0703a"/>
<ellipse cx="988" cy="1080" rx="14" ry="8" fill="#f2d3c2" opacity=".8"/>
<g id="girl">
<g fill="#3c2724">
<ellipse cx="1212" cy="846" rx="12" ry="7" transform="rotate(25 1212 846)"/>
<ellipse cx="1214" cy="836" rx="13" ry="7.5" transform="rotate(55 1214 836)"/>
<ellipse cx="1225" cy="832" rx="11" ry="7" transform="rotate(95 1225 832)"/>
<ellipse cx="1353" cy="872" rx="12" ry="7" transform="rotate(-25 1353 872)"/>
<ellipse cx="1359" cy="881" rx="14" ry="8" transform="rotate(8 1359 881)"/>
<ellipse cx="1355" cy="893" rx="13" ry="7.5" transform="rotate(40 1355 893)"/>
<ellipse cx="1346" cy="899" rx="10" ry="6.5" transform="rotate(65 1346 899)"/>
</g>
<path d="M1214 892 C 1210 858, 1236 832, 1276 832 C 1318 834, 1342 864, 1337 900 C 1334 920, 1322 934, 1308 944 L 1298 944 C 1300 930, 1296 920, 1290 915 L 1222 880 Z" fill="#3c2724"/>
<path d="M1286 833 C 1286 828, 1290 826, 1292 828 M1287 832 C 1292 830, 1296 831, 1299 834" stroke="#3c2724" stroke-width="1.800" fill="none" stroke-linecap="round"/>
<circle cx="1312" cy="927" r="11" fill="#fbdcc2"/><circle cx="1313" cy="928" r="5.500" fill="#f6c2a8"/>
<path d="M1221 870 C 1214 878, 1205 888, 1206 901 C 1206 914, 1212 924, 1219 932 C 1229 944, 1244 949, 1259 948 C 1278 947, 1296 940, 1306 924 C 1308 910, 1302 898, 1294 890 C 1286 880, 1272 873, 1258 870 C 1246 867, 1232 866, 1221 870Z" fill="#fbdcc2"/>
<path d="M1218 884 C 1218 862, 1232 846, 1256 842 C 1284 842, 1304 860, 1310 900 L 1300 904 C 1298 894, 1294 888, 1290 886 L 1288 894 C 1284 884, 1278 880, 1272 878 L 1270 884 C 1264 876, 1256 873, 1248 872 L 1247 878 C 1242 872, 1234 871, 1228 872 L 1226 878 C 1224 876, 1222 878, 1218 884Z" fill="#3c2724"/>
<ellipse cx="1224" cy="905" rx="10" ry="6.500" fill="#f7a898" opacity=".6"/><ellipse cx="1279" cy="917" rx="11" ry="7" fill="#f7a898" opacity=".6"/>
<path d="M1224 891 C 1228 883, 1236 883, 1239 890 M1266 903 C 1270 895, 1280 896, 1285 906" stroke="#4a2a24" stroke-width="2.400" fill="none" stroke-linecap="round"/>
<path d="M1236 908 C 1244 911, 1253 912, 1262 911 C 1262 922, 1256 930, 1248 930 C 1240 928, 1236 918, 1236 908Z" fill="#8c2a24"/><path d="M1240 921 C 1246 918, 1254 919, 1258 924 C 1255 929, 1251 931, 1248 930 C 1244 929, 1241 926, 1240 921Z" fill="#f48e8c"/>
<g fill="#fbdcc2">
<path d="M1163 900 C 1160 890, 1162 880, 1167 878 C 1170 876, 1172 880, 1172 884 C 1172 878, 1176 874, 1179 876 C 1182 878, 1182 884, 1182 888 C 1184 882, 1188 880, 1190 884 C 1192 892, 1190 902, 1186 908 L 1170 914 Z"/>
<path d="M1338 938 C 1338 928, 1342 922, 1346 924 C 1348 926, 1348 930, 1348 932 C 1352 926, 1358 924, 1360 928 C 1364 928, 1366 934, 1362 940 C 1364 946, 1360 952, 1352 954 L 1342 954 Z"/>
</g>
<path d="M1196 1014 L 1306 1020 C 1304 1040, 1300 1058, 1290 1066 L 1262 1082 L 1240 1040 L 1196 1066 L 1176 1036 Z" fill="#3a2f2e"/>
<path d="M1172 1024 l22 -2 l4 40 l-18 8 Z" fill="#dcd4d4"/>
<ellipse cx="1165" cy="1050" rx="17" ry="25" transform="rotate(-14 1165 1050)" fill="#453633"/>
<path d="M1246 1040 l22 6 l-4 34 l-18 6 Z" fill="#e0d9d8"/>
<ellipse cx="1238" cy="1063" rx="19" ry="23" transform="rotate(8 1238 1063)" fill="#59392c"/><ellipse cx="1237" cy="1064" rx="15" ry="19" transform="rotate(8 1237 1064)" fill="#a85a2c"/>
<path d="M1220 950 C 1240 946, 1275 950, 1292 958 C 1302 975, 1308 1000, 1307 1016 L 1196 1008 C 1202 985, 1210 965, 1220 950Z" fill="#e8452d"/>
<path d="M1215 968 L 1186 922" stroke="#e8452d" stroke-width="36" stroke-linecap="round"/>
<path d="M1284 978 C 1300 975, 1320 965, 1334 954" stroke="#e8452d" stroke-width="36" stroke-linecap="round" fill="none"/>
<path d="M1170 917 L 1199 906" stroke="#fbf6ee" stroke-width="15" stroke-linecap="round"/>
<path d="M1328 940 L 1347 958" stroke="#fbf6ee" stroke-width="15" stroke-linecap="round"/>
<path d="M1240 960 L 1229 1012" stroke="#fbe9cf" stroke-width="5"/>
<path d="M1224 977 h26 M1220 998 h26" stroke="#d2331f" stroke-width="3.400" stroke-linecap="round"/>
<path d="M1222 945 C 1228 954, 1236 958, 1244 957 C 1260 960, 1276 960, 1290 954" stroke="#fbf6ee" stroke-width="16" stroke-linecap="round" fill="none"/>
<path d="M1195 1005 C 1230 1017, 1270 1021, 1305 1018" stroke="#fbf6ee" stroke-width="17" stroke-linecap="round" fill="none"/>
<path d="M1196 1011 C 1230 1021, 1270 1025, 1304 1023" stroke="#e9dccb" stroke-width="3" stroke-linecap="round" fill="none" opacity=".8"/>
<g fill="#e2452b"><circle cx="1230" cy="846" r="5.500"/><circle cx="1235" cy="840" r="5"/><circle cx="1335" cy="871" r="7"/><circle cx="1334" cy="884" r="7"/></g>
</g>
<g fill="#8a2f12" stroke="#8a2f12" stroke-width="1.600" stroke-linejoin="round" font-family="'Liberation Sans','Noto Sans CJK SC',sans-serif" font-weight="900" text-anchor="middle">
<text id="tshuang" x="921" y="434.500" font-size="107.500">霜</text>
<text id="tjiang" x="922.500" y="560" font-size="107.500">降</text>
</g>
<g fill="#8a2f12" font-family="'Liberation Serif','Noto Serif CJK SC',serif" font-weight="900" text-anchor="middle">
<text id="d10" x="1024" y="392" font-size="45" letter-spacing="1.500">10</text>
<text id="dyue" x="1023" y="440" font-size="40">月</text>
<text id="d23" x="1023.500" y="485.500" font-size="45" letter-spacing="1.500">23</text>
<text id="dri" x="1023" y="533" font-size="37">日</text>
</g>
<rect x="879" y="607" width="84" height="2.200" fill="#4a2a22"/>
<g fill="#6b2a16" font-family="'Liberation Serif','Noto Serif CJK SC',serif" font-weight="700" font-size="38" text-anchor="middle">
<text class="pr" x="946.500" y="671.5">秋</text>
<text class="pr" x="946.500" y="713.5">风</text>
<text class="pr" x="946.500" y="756.5">萧</text>
<text class="pr" x="946.500" y="799.5">瑟</text>
<text class="pr" x="946.500" y="840.5">天</text>
<text class="pr" x="946.500" y="883.0">气</text>
<text class="pr" x="946.500" y="924.5">凉</text>
<text class="pr" x="974" y="951">，</text>
<text class="pl" x="897" y="671.5">草</text>
<text class="pl" x="897" y="713.5">木</text>
<text class="pl" x="897" y="756.5">草</text>
<text class="pl" x="897" y="799.5">木</text>
<text class="pl" x="897" y="843.0">摇</text>
<text class="pl" x="897" y="884.5">落</text>
<text class="pl" x="897" y="924.5">露</text>
<text class="pl" x="897" y="965.5">为</text>
<text class="pl" x="897" y="1008.5">霜</text>
<text class="pl" id="juhao" x="914.500" y="1031" font-size="27">。</text>
</g>
</svg>
<!--/POSTER-->
    </div>
  </div>
</div>

  </div>
  <div id="side">

    <div class="abs" style="left:18px;top:21px;width:44px;height:43px;border-radius:11px;background:#000"></div>
    <svg class="abs" style="left:22px;top:24px" width="36" height="36" viewBox="0 0 36 36"><path d="M15 6h12l-2 7.100H15.200l-2.400 8.800h10.100L21 29H9.300l.9-4.100-4-1.100 2.900-12.100h4.300z" fill="#fff" stroke="#fff" stroke-width="1.200" stroke-linejoin="round"/></svg>
    <!-- 1 image sparkle  center y=271 -> local 271-162=109 -->
    <div class="sico" style="top:97px"><svg viewBox="0 0 24 24"><path d="M21 12.500V5a2 2 0 0 0-2-2H5a2 2 0 0 0-2 2v7"/><path d="M12 21h7a2 2 0 0 0 2-2v-3l-3.200-3.200a2 2 0 0 0-2.800 0L12.500 15.300"/><circle cx="8.500" cy="8" r="1.300"/><path d="M7 13.200l1.200 2.800 2.800 1.200-2.800 1.200L7 21.200l-1.200-2.800L3 17.200l2.800-1.200z"/></svg></div>
    <!-- 2 history  y=337 -->
    <div class="sico" style="top:163px"><svg viewBox="0 0 24 24"><path d="M3 12a9 9 0 1 0 9-9 9.750 9.750 0 0 0-6.740 2.740L3 8"/><path d="M3 3v5h5"/><path d="M12 7v5l4 2"/></svg></div>
    <!-- 3 node y=404 -->
    <div class="sico" style="top:230px"><svg viewBox="0 0 24 24"><path d="M1 12h6M15.500 12.500H23"/><path d="M18 9.500V9a2.500 2.500 0 0 0-2.500-2.500h-6A2.500 2.500 0 0 0 7 9v6a2.500 2.500 0 0 0 2.500 2.500h6A2.500 2.500 0 0 0 18 15"/></svg></div>
    <!-- 4 blocks sparkle y=471 -->
    <div class="sico" style="top:297px"><svg viewBox="0 0 24 24"><rect x="2" y="5.500" width="7" height="7" rx="1.800"/><rect x="2" y="15.500" width="7" height="7" rx="1.800"/><rect x="12" y="15.500" width="7" height="7" rx="1.800"/><path d="M17.500 1.500l1.500 3.500 3.500 1.500-3.500 1.500-1.500 3.500-1.500-3.500L12.500 6.500 16 5z"/></svg></div>
    <!-- 5 workflow y=537 -->
    <div class="sico" style="top:363px"><svg viewBox="0 0 24 24"><rect x="2" y="2.500" width="7" height="7" rx="2.200"/><rect x="15" y="2.500" width="7" height="7" rx="2.200"/><rect x="15" y="15" width="7" height="7" rx="2.200"/><path d="M9 6h6M5.500 9.500v4a5 5 0 0 0 5 5H15"/></svg></div>
    <!-- 6 template y=604 -->
    <div class="sico" style="top:430px"><svg viewBox="0 0 24 24"><rect x="1.500" y="3" width="21" height="7.500" rx="2.800"/><rect x="1.500" y="14" width="7.500" height="7.500" rx="2.800"/><rect x="12.500" y="14" width="10" height="7.500" rx="2.800"/></svg></div>
    <!-- bottom: help y=1004 -> 842 -->
    <div class="sico" style="top:830px"><svg viewBox="0 0 24 24"><circle cx="12" cy="12" r="10"/><path d="M9.090 9a3 3 0 0 1 5.830 1c0 2-3 3-3 3"/><path d="M12 17h.010"/></svg></div>
    <div class="sico" style="top:897px"><svg viewBox="0 0 24 24"><path d="M3 6.500l7 5.500-7 5.500M11.500 18.500H21"/></svg></div>
    <div class="sico" style="top:963px"><svg viewBox="0 0 24 24"><rect x="1.500" y="3.500" width="21" height="16" rx="2"/><path d="M5.500 8h.010M9.800 8h.010M14.200 8h.010M18.500 8h.010M7.500 11.800h.010M12 11.800h.010M16.500 11.800h.010M6.500 15.800h11"/></svg></div>

  </div>

  <!-- breadcrumb -->
  <div class="abs" style="left:88px;top:59px;width:291px;height:66px;background:#161617;border-radius:11px;box-shadow:0 0 0 1px #222224">
    <div class="abs" id="bc" style="left:23px;top:19px;font-size:22.250px;line-height:30px;color:#fff;white-space:nowrap">image_z_image_turbo</div>
    <svg class="abs" style="left:261px;top:29px" width="12" height="8" viewBox="0 0 12 8"><path d="M1.500 1.500l4.500 4.500 4.500-4.500" fill="none" stroke="#fff" stroke-width="1.800"/></svg>
  </div>
  <!-- stats -->
  <div class="abs" id="stats" style="left:88px;top:960px;font-size:14px;line-height:18px;color:#7c7c7c;white-space:pre">T: 0.00s
I: 0
N: 11 [10]
V: 25
FPS:60.24</div>
  <!-- action bar -->
  <div class="abs" style="left:1520px;top:60px;width:463px;height:65px;background:#171718;border-radius:11px;box-shadow:0 0 0 1px #2b2b2d">
    <svg class="abs" style="left:16px;top:26px" width="9" height="19" viewBox="0 0 9 19"><g fill="#c8c8c8"><circle cx="1.500" cy="2" r="1.300"/><circle cx="7.500" cy="2" r="1.300"/><circle cx="1.500" cy="9.500" r="1.300"/><circle cx="7.500" cy="9.500" r="1.300"/><circle cx="1.500" cy="17" r="1.300"/><circle cx="7.500" cy="17" r="1.300"/></g></svg>
    <div class="abs" style="left:37px;top:8px;width:159px;height:50px;background:#63a6fb;border-radius:8px 0 0 8px">
      <svg class="abs" style="left:17px;top:14px" width="20" height="22" viewBox="0 0 20 22"><path d="M3 3.200v15.600a1 1 0 0 0 1.500.860l13-7.800a1 1 0 0 0 0-1.720l-13-7.800A1 1 0 0 0 3 3.200z" fill="none" stroke="#0d2a66" stroke-width="2" stroke-linejoin="round"/></svg>
      <div class="abs" style="left:49px;top:11px;font-size:19.500px;line-height:28px;color:#0d2a66;white-space:nowrap">运行</div>
      <svg class="abs" style="left:120px;top:19px" width="20" height="12" viewBox="0 0 20 12"><path d="M1.500 1.500l8.500 8.500 8.500-8.500" fill="none" stroke="#0d2a66" stroke-width="2.200"/></svg>
    </div>
    <div class="abs" style="left:196px;top:8px;width:77px;height:50px;background:#0b0b0c;border-radius:0 8px 8px 0;border:1px solid #4a4a4c;border-left:none">
      <div class="abs" style="left:17px;top:8px;font-size:24px;line-height:32px;color:#fff">1</div>
      <svg class="abs" style="left:52px;top:7px" width="14" height="9" viewBox="0 0 14 9"><path d="M1.500 7.500l5.500-5.500 5.500 5.500" fill="none" stroke="#d8d8d8" stroke-width="1.800"/></svg>
      <svg class="abs" style="left:52px;top:32px" width="14" height="9" viewBox="0 0 14 9"><path d="M1.500 1.500l5.500 5.500 5.500-5.500" fill="none" stroke="#9a9a9a" stroke-width="1.800"/></svg>
    </div>
    <svg class="abs" style="left:292px;top:24px" width="18" height="18" viewBox="0 0 18 18"><path d="M1.500 1.500l15 15M16.500 1.500l-15 15" stroke="#8a8a8a" stroke-width="2"/></svg>
    <svg class="abs" style="left:345px;top:22px" width="22" height="22" viewBox="0 0 22 22"><rect x="1.500" y="1.500" width="19" height="19" rx="3" fill="none" stroke="#8a8a8a" stroke-width="2"/></svg>
    <div class="abs" style="left:395px;top:10px;width:45px;height:45px;border-radius:9px;background:#262729"></div>
    <svg class="abs" style="left:407px;top:22.500px" width="21" height="21" viewBox="0 0 24 24" fill="none" stroke="#a8a8a8" stroke-width="2" stroke-linecap="round" stroke-linejoin="round"><path d="M3 12a9 9 0 1 0 9-9 9.750 9.750 0 0 0-6.740 2.740L3 8"/><path d="M3 3v5h5"/><path d="M12 7v5l4 2"/></svg>
  </div>
  <!-- bottom-right toolbar -->
  <div class="abs" style="left:1631px;top:993px;width:352px;height:68px;background:#171718;border-radius:11px;box-shadow:0 0 0 1px #333335">
    <div class="abs" style="left:12px;top:12px;width:44px;height:44px;border-radius:9px;background:#3a3a3c"></div>
    <svg class="abs" style="left:23px;top:23px" width="22" height="22" viewBox="0 0 24 24" fill="none" stroke="#fff" stroke-width="2" stroke-linecap="round" stroke-linejoin="round"><path d="M4.037 4.688a.495.495 0 0 1 .651-.651l16 6.500a.500.500 0 0 1-.063.947l-6.124 1.580a2 2 0 0 0-1.438 1.435l-1.579 6.126a.500.500 0 0 1-.947.063z"/></svg>
    <svg class="abs" style="left:65px;top:29px" width="14" height="9" viewBox="0 0 14 9"><path d="M1.500 1.500l5.500 5.500 5.500-5.500" fill="none" stroke="#fff" stroke-width="1.800"/></svg>
    <div class="abs" style="left:93px;top:15px;width:1px;height:38px;background:#38383a"></div>
    <svg class="abs" style="left:110px;top:23px" width="22" height="22" viewBox="0 0 24 24" fill="none" stroke="#fff" stroke-width="2" stroke-linecap="round" stroke-linejoin="round"><circle cx="12" cy="12" r="3"/><path d="M3 7V5a2 2 0 0 1 2-2h2M17 3h2a2 2 0 0 1 2 2v2M21 17v2a2 2 0 0 1-2 2h-2M7 21H5a2 2 0 0 1-2-2v-2"/></svg>
    <div class="abs" id="zoomp" style="left:160px;top:23px;font-size:16.500px;line-height:22px;color:#fff">52%</div>
    <svg class="abs" style="left:203px;top:29px" width="14" height="9" viewBox="0 0 14 9"><path d="M1.500 1.500l5.500 5.500 5.500-5.500" fill="none" stroke="#fff" stroke-width="1.800"/></svg>
    <div class="abs" style="left:238px;top:15px;width:1px;height:38px;background:#38383a"></div>
    <svg class="abs" style="left:256px;top:23px" width="22" height="22" viewBox="0 0 24 24" fill="none" stroke="#fff" stroke-width="2" stroke-linecap="round" stroke-linejoin="round"><path d="M14.106 5.553a2 2 0 0 0 1.788 0l3.659-1.830A1 1 0 0 1 21 4.619v12.764a1 1 0 0 1-.553.894l-4.553 2.277a2 2 0 0 1-1.788 0l-4.212-2.106a2 2 0 0 0-1.788 0l-3.659 1.830A1 1 0 0 1 3 19.381V6.618a1 1 0 0 1 .553-.894l4.553-2.277a2 2 0 0 1 1.788 0zM15 5.764v15M9 3.236v15"/></svg>
    <svg class="abs" style="left:306px;top:22px" width="24" height="24" viewBox="0 0 24 24" fill="none" stroke="#fff" stroke-width="2" stroke-linecap="round" stroke-linejoin="round"><circle cx="18" cy="5" r="2.600"/><circle cx="6" cy="19" r="2.600"/><path d="M9 19h4.500M15.500 5H12a3.500 3.500 0 0 0-3.300 2.400M15 13.500c.8.300 1.500.9 1.900 1.700M2.500 3l19 19"/></svg>
  </div>

</div>
</body>
</html>
